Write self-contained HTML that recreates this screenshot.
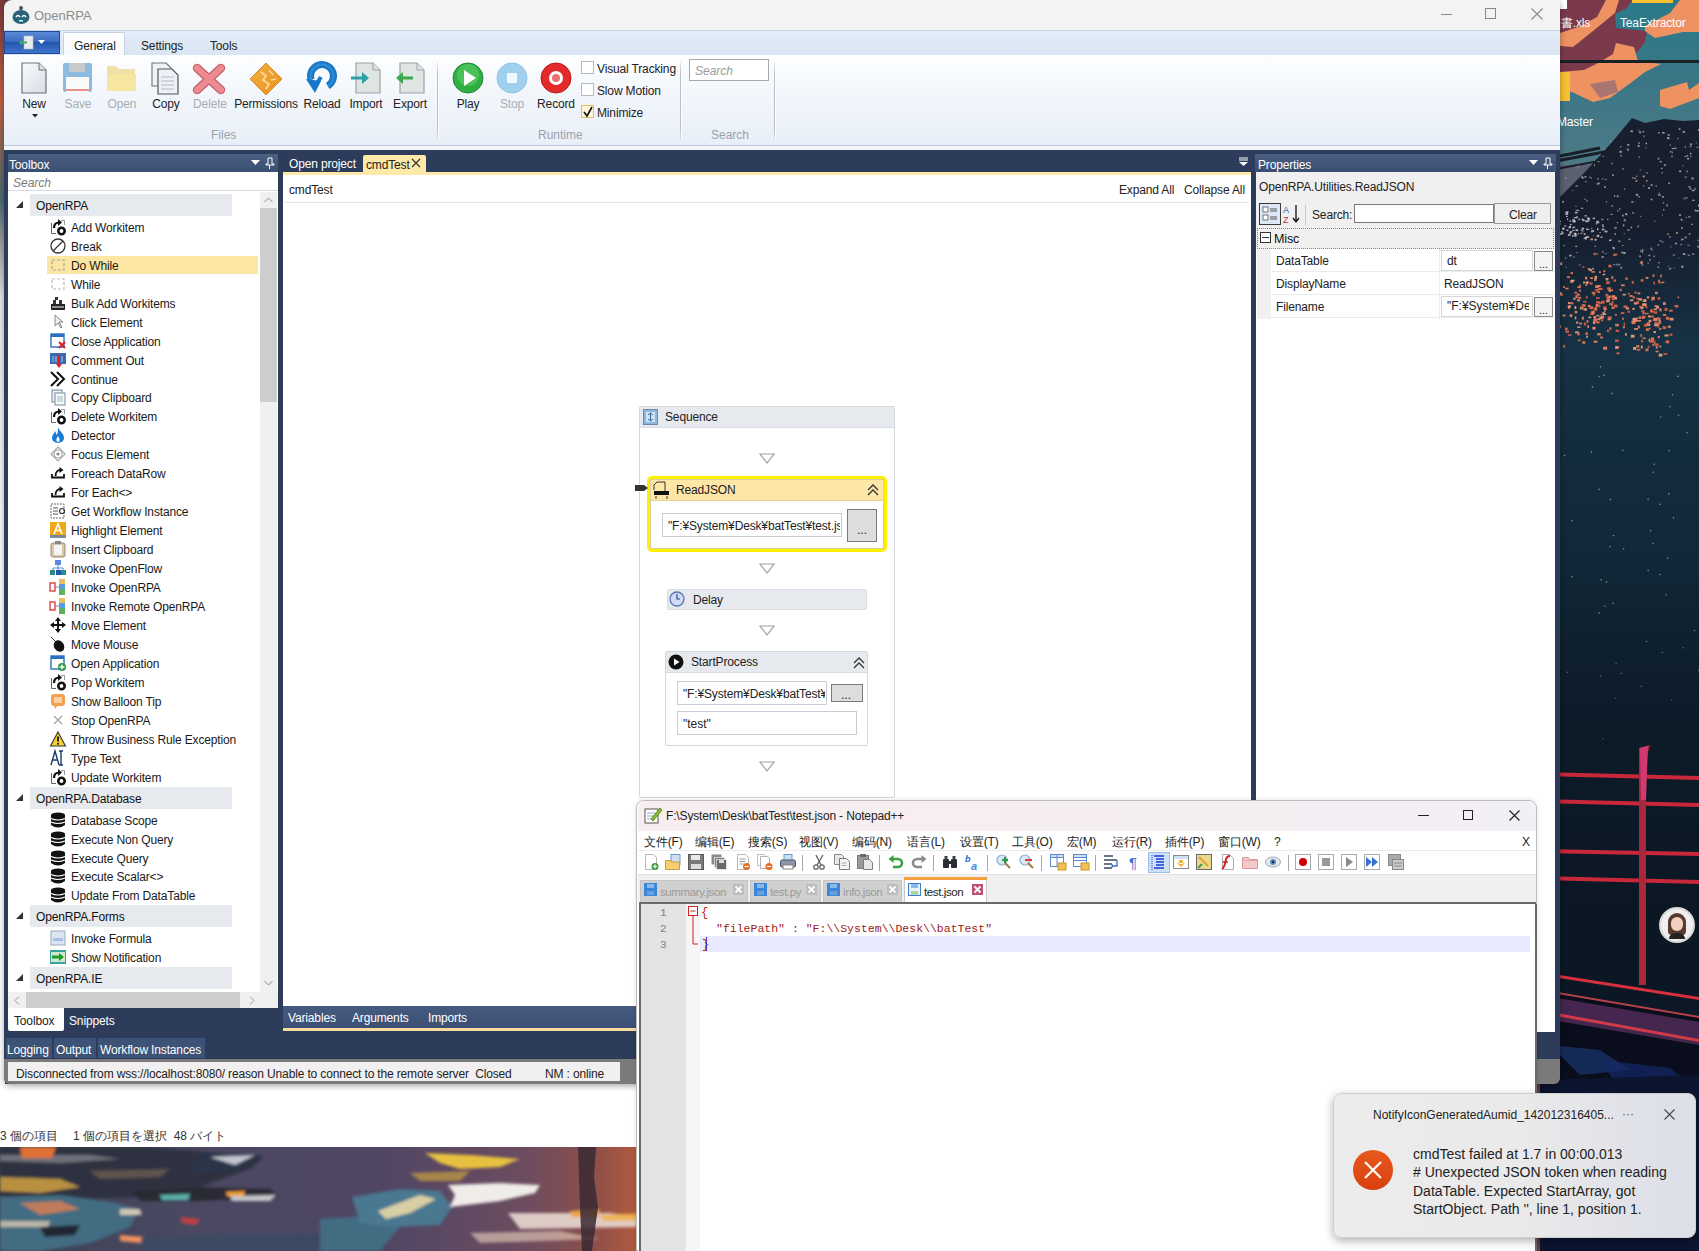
<!DOCTYPE html><html><head><meta charset="utf-8"><style>
*{box-sizing:border-box;margin:0;padding:0}
html,body{width:1699px;height:1251px;overflow:hidden;position:relative;background:#6e3a40;font-family:"Liberation Sans",sans-serif;font-size:12px;color:#1e1e1e}
.a{position:absolute}
.t{position:absolute;white-space:nowrap;line-height:14px}
svg{position:absolute;overflow:visible}
</style></head><body>
<svg style="left:1540px;top:0px;" width="159" height="1251" viewBox="0 0 159 1251">
<defs>
<linearGradient id="wsky" x1="0" y1="0" x2="0" y2="1">
<stop offset="0" stop-color="#2a7a8a"/><stop offset="0.45" stop-color="#3a7686"/><stop offset="1" stop-color="#4f7a86"/></linearGradient>
<linearGradient id="wdark" x1="0" y1="0" x2="0" y2="1">
<stop offset="0" stop-color="#182030"/><stop offset="0.1" stop-color="#161e2e"/><stop offset="0.2" stop-color="#163244"/><stop offset="0.3" stop-color="#132c3c"/><stop offset="0.5" stop-color="#0f2232"/><stop offset="0.7" stop-color="#0c1826"/><stop offset="1" stop-color="#0d1828"/></linearGradient>
<linearGradient id="wfade" x1="0" y1="0" x2="0" y2="1"><stop offset="0" stop-color="#0b1622" stop-opacity="0"/><stop offset=".35" stop-color="#0b1622" stop-opacity=".5"/><stop offset="1" stop-color="#0b1622" stop-opacity=".6"/></linearGradient>
<filter id="bl1"><feGaussianBlur stdDeviation="1.2"/></filter>
<filter id="bl3"><feGaussianBlur stdDeviation="6"/></filter>
</defs>
<rect x="0" y="0" width="159" height="170" fill="url(#wsky)"/><rect x="0" y="165" width="80" height="40" fill="#5a606e"/>
<path d="M0 0 H92 L87 8 L75 14 L76 28 L107 31 L105 42 L94 56 L84 59 L60 62 L61 72 L20 72 L0 72z" fill="#7a3a4c"/>
<path d="M66 0 L79 0 L75 13 L53 31 L33 47 L20 46 L20 33 L41 26 L57 17z" fill="#ee9262"/>
<path d="M76 43 L94 47 L98 61 L121 64 L105 72 L92 82 L81 90 L70 98 L53 102 L32 92 L20 90 L20 72 L44 70 L60 62 L73 54z" fill="#ee9262"/>
<path d="M50 84 L75 80 L78 92 L60 98z" fill="#8a6a78" opacity=".7"/>
<path d="M105 26 L130 13 L140 0 L159 0 L159 32 L143 32 L115 38 L105 31z" fill="#ee9262"/>
<path d="M120 90 L147 82 L149 90 L159 83 L159 98 L130 109 L120 106z" fill="#ee9262"/>
<rect x="0" y="72" width="30" height="29" fill="#f8c030"/>
<rect x="92" y="0" width="41" height="3" fill="#f8c030"/>
<rect x="0" y="60" width="159" height="3" fill="#1a2028"/>
<path d="M0 160 L60 148" stroke="#1a1e28" stroke-width="3" fill="none"/>
<path d="M0 202 L20 197 L45 172 L73 141 L92 118 L105 123 L124 119 L143 121 L159 120 V1251 H0z" fill="url(#wdark)"/>
<path d="M0 164 L75 150" stroke="#1a1e28" stroke-width="3" fill="none"/><path d="M0 172 L75 158" stroke="#1a1e28" stroke-width="2" fill="none"/>
<rect x="103.5" y="135.5" width="1.1" height="1.6" fill="#f0b890" opacity=".7"/><rect x="144.6" y="156.1" width="1.7" height="1.1" fill="#c8c8cc" opacity=".7"/><rect x="14.4" y="186.6" width="1.2" height="1.2" fill="#f0b890" opacity=".7"/><rect x="99.8" y="262.4" width="1.9" height="1.0" fill="#f0b890" opacity=".7"/><rect x="35.2" y="205.7" width="1.4" height="1.1" fill="#a8aab4" opacity=".7"/><rect x="129.8" y="151.2" width="1.9" height="1.2" fill="#f0b890" opacity=".7"/><rect x="15.5" y="228.3" width="1.1" height="1.2" fill="#f0b890" opacity=".7"/><rect x="108.2" y="187.0" width="1.7" height="1.9" fill="#e8e0dc" opacity=".7"/><rect x="57.5" y="161.0" width="2.0" height="1.2" fill="#a8aab4" opacity=".7"/><rect x="91.3" y="201.2" width="2.1" height="1.3" fill="#e8e0dc" opacity=".7"/><rect x="155.8" y="142.1" width="1.2" height="1.3" fill="#8a8c9a" opacity=".7"/><rect x="148.4" y="186.1" width="2.1" height="1.6" fill="#c8c8cc" opacity=".7"/><rect x="139.2" y="170.5" width="1.9" height="1.6" fill="#e8e0dc" opacity=".7"/><rect x="72.5" y="246.8" width="1.7" height="1.7" fill="#e8e0dc" opacity=".7"/><rect x="9.6" y="226.7" width="2.5" height="1.8" fill="#f0b890" opacity=".7"/><rect x="45.3" y="180.9" width="1.0" height="1.5" fill="#e8e0dc" opacity=".7"/><rect x="9.4" y="236.4" width="2.1" height="1.4" fill="#a8aab4" opacity=".7"/><rect x="145.8" y="197.0" width="1.7" height="1.5" fill="#a8aab4" opacity=".7"/><rect x="140.5" y="243.8" width="1.4" height="1.4" fill="#f0b890" opacity=".7"/><rect x="57.0" y="253.2" width="1.2" height="1.2" fill="#a8aab4" opacity=".7"/><rect x="77.1" y="210.4" width="1.4" height="1.1" fill="#e8e0dc" opacity=".7"/><rect x="85.0" y="213.4" width="2.4" height="1.7" fill="#e8e0dc" opacity=".7"/><rect x="82.0" y="214.6" width="1.7" height="1.9" fill="#c8c8cc" opacity=".7"/><rect x="151.3" y="223.7" width="1.6" height="1.4" fill="#f0b890" opacity=".7"/><rect x="16.5" y="217.0" width="1.3" height="2.0" fill="#c8c8cc" opacity=".7"/><rect x="70.1" y="140.9" width="1.1" height="1.0" fill="#f0b890" opacity=".7"/><rect x="139.0" y="214.0" width="2.0" height="2.0" fill="#a8aab4" opacity=".7"/><rect x="95.8" y="193.8" width="2.3" height="2.0" fill="#c8c8cc" opacity=".7"/><rect x="74.1" y="195.2" width="1.2" height="1.7" fill="#c8c8cc" opacity=".7"/><rect x="117.7" y="194.4" width="1.8" height="1.2" fill="#a8aab4" opacity=".7"/><rect x="151.4" y="177.5" width="2.4" height="1.8" fill="#f0b890" opacity=".7"/><rect x="47.4" y="218.2" width="2.0" height="1.3" fill="#c8c8cc" opacity=".7"/><rect x="122.7" y="202.2" width="1.5" height="1.2" fill="#f0b890" opacity=".7"/><rect x="129.0" y="267.8" width="2.2" height="1.8" fill="#a8aab4" opacity=".7"/><rect x="117.6" y="157.9" width="1.7" height="1.7" fill="#f0b890" opacity=".7"/><rect x="157.3" y="239.6" width="1.4" height="1.7" fill="#8a8c9a" opacity=".7"/><rect x="152.1" y="189.8" width="2.4" height="1.4" fill="#e8e0dc" opacity=".7"/><rect x="99.2" y="255.5" width="1.7" height="1.7" fill="#c8c8cc" opacity=".7"/><rect x="127.1" y="137.3" width="2.4" height="1.8" fill="#c8c8cc" opacity=".7"/><rect x="119.3" y="194.3" width="1.7" height="1.6" fill="#a8aab4" opacity=".7"/><rect x="13.8" y="262.2" width="1.7" height="1.7" fill="#8a8c9a" opacity=".7"/><rect x="157.9" y="129.0" width="2.4" height="1.8" fill="#f0b890" opacity=".7"/><rect x="23.2" y="244.8" width="2.0" height="1.4" fill="#8a8c9a" opacity=".7"/><rect x="87.2" y="144.0" width="2.2" height="1.7" fill="#c8c8cc" opacity=".7"/><rect x="16.3" y="233.7" width="1.7" height="1.9" fill="#a8aab4" opacity=".7"/><rect x="131.4" y="155.6" width="1.3" height="1.5" fill="#e8e0dc" opacity=".7"/><rect x="121.4" y="172.3" width="1.6" height="1.1" fill="#f0b890" opacity=".7"/><rect x="144.7" y="176.3" width="2.0" height="1.8" fill="#8a8c9a" opacity=".7"/><rect x="82.2" y="244.9" width="1.2" height="1.2" fill="#f0b890" opacity=".7"/><rect x="81.2" y="251.6" width="1.9" height="1.8" fill="#a8aab4" opacity=".7"/><rect x="98.4" y="142.4" width="1.5" height="1.5" fill="#c8c8cc" opacity=".7"/><rect x="88.3" y="238.7" width="2.3" height="1.1" fill="#c8c8cc" opacity=".7"/><rect x="15.5" y="190.6" width="2.1" height="1.9" fill="#c8c8cc" opacity=".7"/><rect x="70.5" y="213.8" width="1.9" height="1.2" fill="#f0b890" opacity=".7"/><rect x="44.1" y="198.7" width="1.8" height="1.2" fill="#8a8c9a" opacity=".7"/><rect x="83.2" y="252.0" width="2.4" height="1.9" fill="#e8e0dc" opacity=".7"/><rect x="32.2" y="189.9" width="1.2" height="1.4" fill="#8a8c9a" opacity=".7"/><rect x="11.6" y="222.1" width="2.3" height="1.2" fill="#c8c8cc" opacity=".7"/><rect x="113.9" y="220.7" width="1.4" height="1.1" fill="#a8aab4" opacity=".7"/><rect x="74.4" y="233.3" width="1.6" height="1.5" fill="#c8c8cc" opacity=".7"/><rect x="157.4" y="245.7" width="2.1" height="2.0" fill="#a8aab4" opacity=".7"/><rect x="64.2" y="186.1" width="1.5" height="1.7" fill="#e8e0dc" opacity=".7"/><rect x="3.1" y="205.3" width="2.1" height="1.4" fill="#8a8c9a" opacity=".7"/><rect x="82.3" y="167.8" width="1.2" height="1.9" fill="#c8c8cc" opacity=".7"/><rect x="36.3" y="252.1" width="1.4" height="1.0" fill="#c8c8cc" opacity=".7"/><rect x="123.9" y="164.2" width="2.2" height="1.8" fill="#a8aab4" opacity=".7"/><rect x="107.5" y="262.2" width="1.2" height="1.9" fill="#8a8c9a" opacity=".7"/><rect x="90.7" y="226.6" width="1.4" height="1.8" fill="#c8c8cc" opacity=".7"/><rect x="29.2" y="254.8" width="2.4" height="1.6" fill="#e8e0dc" opacity=".7"/><rect x="127.5" y="137.1" width="1.1" height="1.9" fill="#a8aab4" opacity=".7"/><rect x="72.1" y="174.2" width="1.6" height="1.9" fill="#f0b890" opacity=".7"/><rect x="98.9" y="131.3" width="2.4" height="2.0" fill="#a8aab4" opacity=".7"/><rect x="148.2" y="216.2" width="2.1" height="1.3" fill="#f0b890" opacity=".7"/><rect x="79.5" y="150.8" width="2.2" height="2.0" fill="#e8e0dc" opacity=".7"/><rect x="80.4" y="266.8" width="1.7" height="1.9" fill="#f0b890" opacity=".7"/><rect x="16.9" y="243.7" width="2.0" height="1.5" fill="#8a8c9a" opacity=".7"/><rect x="141.3" y="265.7" width="2.0" height="2.0" fill="#e8e0dc" opacity=".7"/><rect x="54.5" y="245.7" width="1.6" height="1.3" fill="#a8aab4" opacity=".7"/><rect x="11.2" y="232.4" width="1.6" height="1.1" fill="#e8e0dc" opacity=".7"/><rect x="105.8" y="180.2" width="2.0" height="1.3" fill="#f0b890" opacity=".7"/><rect x="38.5" y="167.5" width="1.3" height="1.3" fill="#8a8c9a" opacity=".7"/><rect x="52.3" y="267.8" width="1.4" height="2.0" fill="#e8e0dc" opacity=".7"/><rect x="49.2" y="176.7" width="1.5" height="1.1" fill="#c8c8cc" opacity=".7"/><rect x="44.3" y="220.1" width="1.8" height="1.0" fill="#a8aab4" opacity=".7"/><rect x="37.0" y="209.9" width="2.3" height="1.2" fill="#f0b890" opacity=".7"/><rect x="142.0" y="238.7" width="1.6" height="1.3" fill="#f0b890" opacity=".7"/><rect x="156.6" y="146.7" width="2.0" height="1.0" fill="#f0b890" opacity=".7"/><rect x="132.8" y="254.3" width="2.1" height="1.8" fill="#8a8c9a" opacity=".7"/><rect x="22.1" y="200.9" width="1.9" height="1.8" fill="#f0b890" opacity=".7"/><rect x="2.6" y="224.5" width="1.1" height="1.0" fill="#a8aab4" opacity=".7"/><rect x="101.3" y="264.1" width="2.3" height="1.6" fill="#8a8c9a" opacity=".7"/><rect x="99.8" y="215.8" width="1.7" height="1.0" fill="#a8aab4" opacity=".7"/><rect x="126.8" y="233.5" width="2.3" height="1.1" fill="#f0b890" opacity=".7"/><rect x="83.6" y="233.1" width="1.4" height="1.1" fill="#8a8c9a" opacity=".7"/><rect x="42.2" y="230.8" width="1.3" height="1.6" fill="#a8aab4" opacity=".7"/><rect x="73.2" y="247.6" width="1.7" height="1.7" fill="#c8c8cc" opacity=".7"/><rect x="121.9" y="214.5" width="1.1" height="1.1" fill="#a8aab4" opacity=".7"/><rect x="40.4" y="232.8" width="1.9" height="1.1" fill="#e8e0dc" opacity=".7"/><rect x="76.7" y="195.4" width="2.0" height="1.7" fill="#c8c8cc" opacity=".7"/><rect x="46.2" y="199.9" width="1.7" height="1.8" fill="#8a8c9a" opacity=".7"/><rect x="157.9" y="204.6" width="2.5" height="1.9" fill="#e8e0dc" opacity=".7"/><rect x="2.8" y="191.6" width="2.5" height="1.4" fill="#f0b890" opacity=".7"/><rect x="150.3" y="155.6" width="1.1" height="1.7" fill="#f0b890" opacity=".7"/><rect x="41.6" y="177.1" width="2.2" height="1.5" fill="#f0b890" opacity=".7"/><rect x="141.0" y="227.0" width="1.7" height="1.9" fill="#a8aab4" opacity=".7"/><rect x="62.7" y="148.1" width="2.0" height="1.4" fill="#8a8c9a" opacity=".7"/><rect x="115.6" y="185.3" width="1.5" height="1.8" fill="#8a8c9a" opacity=".7"/><rect x="0.3" y="233.9" width="1.2" height="1.9" fill="#8a8c9a" opacity=".7"/><rect x="113.4" y="255.7" width="1.4" height="1.1" fill="#e8e0dc" opacity=".7"/><rect x="62.0" y="251.1" width="1.5" height="1.4" fill="#c8c8cc" opacity=".7"/><rect x="16.2" y="246.0" width="2.0" height="1.1" fill="#e8e0dc" opacity=".7"/><rect x="154.4" y="188.3" width="1.3" height="1.4" fill="#e8e0dc" opacity=".7"/><rect x="152.0" y="253.2" width="2.4" height="1.9" fill="#8a8c9a" opacity=".7"/><rect x="87.3" y="229.3" width="2.4" height="1.4" fill="#c8c8cc" opacity=".7"/><rect x="97.8" y="145.1" width="1.7" height="1.9" fill="#e8e0dc" opacity=".7"/><rect x="87.5" y="149.8" width="1.5" height="1.3" fill="#8a8c9a" opacity=".7"/><rect x="117.5" y="266.6" width="1.6" height="1.2" fill="#e8e0dc" opacity=".7"/><rect x="76.8" y="222.0" width="1.3" height="1.2" fill="#c8c8cc" opacity=".7"/><rect x="33.1" y="256.4" width="1.8" height="1.5" fill="#8a8c9a" opacity=".7"/><rect x="52.9" y="235.1" width="1.2" height="1.2" fill="#8a8c9a" opacity=".7"/><rect x="41.1" y="207.6" width="2.1" height="1.4" fill="#c8c8cc" opacity=".7"/><rect x="65.8" y="201.0" width="1.4" height="1.8" fill="#8a8c9a" opacity=".7"/><rect x="79.2" y="208.3" width="1.2" height="1.5" fill="#e8e0dc" opacity=".7"/><rect x="100.1" y="250.1" width="1.1" height="1.9" fill="#a8aab4" opacity=".7"/><rect x="61.1" y="218.6" width="2.4" height="1.8" fill="#8a8c9a" opacity=".7"/><rect x="138.8" y="128.2" width="1.6" height="1.8" fill="#c8c8cc" opacity=".7"/><rect x="127.9" y="265.4" width="1.0" height="1.4" fill="#8a8c9a" opacity=".7"/><rect x="147.4" y="244.7" width="2.5" height="1.2" fill="#8a8c9a" opacity=".7"/><rect x="83.1" y="223.9" width="1.1" height="1.8" fill="#8a8c9a" opacity=".7"/><rect x="90.5" y="130.5" width="2.4" height="1.6" fill="#e8e0dc" opacity=".7"/><rect x="84.0" y="188.4" width="1.1" height="1.3" fill="#c8c8cc" opacity=".7"/><rect x="150.0" y="152.8" width="1.3" height="1.6" fill="#e8e0dc" opacity=".7"/><rect x="73.2" y="264.0" width="1.7" height="1.2" fill="#a8aab4" opacity=".7"/><rect x="39.3" y="264.3" width="1.1" height="1.2" fill="#e8e0dc" opacity=".7"/><rect x="140.7" y="218.8" width="1.4" height="1.7" fill="#c8c8cc" opacity=".7"/><rect x="147.1" y="157.9" width="2.0" height="1.7" fill="#c8c8cc" opacity=".7"/><rect x="57.6" y="182.5" width="2.2" height="1.7" fill="#c8c8cc" opacity=".7"/><rect x="80.3" y="154.8" width="1.5" height="1.8" fill="#a8aab4" opacity=".7"/><rect x="120.9" y="167.8" width="1.7" height="1.2" fill="#f0b890" opacity=".7"/><rect x="35.5" y="185.5" width="2.4" height="1.1" fill="#c8c8cc" opacity=".7"/><rect x="62.6" y="155.9" width="1.2" height="1.1" fill="#f0b890" opacity=".7"/><rect x="142.8" y="253.1" width="2.5" height="1.9" fill="#c8c8cc" opacity=".7"/><rect x="148.8" y="233.2" width="1.5" height="1.7" fill="#c8c8cc" opacity=".7"/><rect x="133.4" y="267.8" width="1.3" height="1.0" fill="#8a8c9a" opacity=".7"/><rect x="44.5" y="176.0" width="1.8" height="1.8" fill="#c8c8cc" opacity=".7"/><rect x="60.4" y="236.5" width="2.2" height="1.4" fill="#e8e0dc" opacity=".7"/><rect x="7.8" y="193.7" width="1.8" height="1.4" fill="#e8e0dc" opacity=".7"/><rect x="51.4" y="231.9" width="1.0" height="1.4" fill="#8a8c9a" opacity=".7"/><rect x="129.1" y="236.2" width="1.6" height="1.5" fill="#c8c8cc" opacity=".7"/><rect x="127.7" y="134.0" width="2.1" height="1.9" fill="#a8aab4" opacity=".7"/><rect x="53.9" y="164.5" width="1.1" height="1.7" fill="#f0b890" opacity=".7"/><rect x="109.6" y="259.0" width="1.0" height="1.8" fill="#e8e0dc" opacity=".7"/><rect x="145.7" y="216.9" width="1.0" height="1.2" fill="#c8c8cc" opacity=".7"/><rect x="75.6" y="263.7" width="2.2" height="1.9" fill="#8a8c9a" opacity=".7"/><rect x="129.6" y="144.2" width="1.3" height="1.8" fill="#8a8c9a" opacity=".7"/><rect x="117.4" y="244.3" width="1.9" height="1.3" fill="#a8aab4" opacity=".7"/><rect x="50.8" y="177.5" width="1.1" height="1.2" fill="#f0b890" opacity=".7"/><rect x="119.7" y="160.9" width="2.0" height="1.5" fill="#c8c8cc" opacity=".7"/><rect x="86.6" y="148.3" width="2.3" height="2.0" fill="#8a8c9a" opacity=".7"/><rect x="15.3" y="197.3" width="1.3" height="1.1" fill="#8a8c9a" opacity=".7"/><rect x="73.3" y="254.2" width="2.1" height="1.8" fill="#a8aab4" opacity=".7"/><rect x="105.6" y="142.6" width="1.4" height="1.6" fill="#e8e0dc" opacity=".7"/><rect x="59.3" y="232.0" width="1.7" height="1.2" fill="#a8aab4" opacity=".7"/><rect x="37.4" y="165.8" width="1.3" height="1.1" fill="#f0b890" opacity=".7"/><rect x="83.7" y="219.2" width="2.0" height="2.0" fill="#c8c8cc" opacity=".7"/><rect x="16.3" y="193.8" width="2.3" height="1.9" fill="#a8aab4" opacity=".7"/><rect x="154.7" y="209.6" width="1.6" height="1.9" fill="#c8c8cc" opacity=".7"/><rect x="71.4" y="162.7" width="1.2" height="1.6" fill="#c8c8cc" opacity=".7"/><rect x="98.6" y="156.6" width="1.5" height="1.0" fill="#e8e0dc" opacity=".7"/><rect x="159.0" y="130.5" width="2.2" height="1.8" fill="#a8aab4" opacity=".7"/><rect x="65.0" y="178.9" width="1.5" height="1.2" fill="#f0b890" opacity=".7"/><rect x="126.4" y="204.5" width="1.6" height="1.8" fill="#c8c8cc" opacity=".7"/><rect x="105.6" y="147.4" width="1.1" height="1.2" fill="#f0b890" opacity=".7"/><rect x="110.6" y="184.4" width="2.0" height="1.4" fill="#e8e0dc" opacity=".7"/><rect x="8.2" y="233.1" width="1.6" height="1.0" fill="#e8e0dc" opacity=".7"/><rect x="121.9" y="241.3" width="1.6" height="1.4" fill="#a8aab4" opacity=".7"/><rect x="149.8" y="188.0" width="1.6" height="1.8" fill="#a8aab4" opacity=".7"/><rect x="64.6" y="253.0" width="2.2" height="1.1" fill="#8a8c9a" opacity=".7"/><rect x="128.2" y="182.5" width="1.9" height="1.4" fill="#f0b890" opacity=".7"/><rect x="80.2" y="146.2" width="1.2" height="1.2" fill="#e8e0dc" opacity=".7"/><rect x="119.8" y="239.9" width="1.5" height="1.8" fill="#a8aab4" opacity=".7"/><rect x="6.9" y="257.4" width="1.1" height="1.9" fill="#e8e0dc" opacity=".7"/><rect x="61.7" y="256.1" width="2.0" height="1.9" fill="#f0b890" opacity=".7"/><rect x="101.8" y="249.2" width="1.6" height="1.8" fill="#f0b890" opacity=".7"/><rect x="131.8" y="151.5" width="1.1" height="1.9" fill="#a8aab4" opacity=".7"/><rect x="24.9" y="177.1" width="1.4" height="1.7" fill="#a8aab4" opacity=".7"/><rect x="142.7" y="131.0" width="2.3" height="1.7" fill="#f0b890" opacity=".7"/><rect x="106.2" y="172.0" width="1.9" height="1.6" fill="#8a8c9a" opacity=".7"/><rect x="99.7" y="169.4" width="1.5" height="1.2" fill="#8a8c9a" opacity=".7"/><rect x="61.9" y="178.3" width="1.7" height="1.0" fill="#f0b890" opacity=".7"/><rect x="98.4" y="196.0" width="1.7" height="1.6" fill="#a8aab4" opacity=".7"/><rect x="130.2" y="246.3" width="1.6" height="1.1" fill="#8a8c9a" opacity=".7"/><rect x="57.0" y="178.0" width="1.8" height="1.7" fill="#8a8c9a" opacity=".7"/><rect x="146.6" y="170.5" width="1.1" height="1.8" fill="#f0b890" opacity=".7"/><rect x="142.3" y="219.6" width="1.0" height="1.1" fill="#a8aab4" opacity=".7"/><rect x="97.6" y="225.4" width="1.3" height="2.0" fill="#c8c8cc" opacity=".7"/><rect x="78.2" y="263.7" width="2.0" height="1.7" fill="#a8aab4" opacity=".7"/><rect x="35.2" y="245.8" width="2.1" height="1.2" fill="#f0b890" opacity=".7"/><rect x="142.5" y="164.9" width="1.2" height="1.5" fill="#8a8c9a" opacity=".7"/><rect x="146.3" y="155.2" width="1.9" height="1.2" fill="#e8e0dc" opacity=".7"/><rect x="59.2" y="153.8" width="1.2" height="1.9" fill="#8a8c9a" opacity=".7"/><rect x="108.1" y="254.8" width="2.2" height="1.3" fill="#a8aab4" opacity=".7"/><rect x="122.2" y="132.0" width="2.4" height="1.5" fill="#e8e0dc" opacity=".7"/><rect x="82.9" y="224.9" width="1.4" height="1.5" fill="#c8c8cc" opacity=".7"/><rect x="136.2" y="232.0" width="1.4" height="2.0" fill="#e8e0dc" opacity=".7"/><rect x="91.8" y="177.2" width="1.7" height="1.2" fill="#c8c8cc" opacity=".7"/><rect x="118.2" y="132.0" width="1.4" height="1.6" fill="#f0b890" opacity=".7"/><rect x="156.5" y="210.0" width="2.1" height="1.7" fill="#e8e0dc" opacity=".7"/><rect x="35.2" y="167.2" width="1.6" height="1.4" fill="#8a8c9a" opacity=".7"/><rect x="7.6" y="195.8" width="2.0" height="1.0" fill="#f0b890" opacity=".7"/><rect x="35.7" y="209.6" width="1.2" height="1.4" fill="#f0b890" opacity=".7"/><rect x="131.7" y="148.0" width="2.4" height="1.2" fill="#c8c8cc" opacity=".7"/><rect x="101.5" y="251.3" width="1.6" height="1.3" fill="#e8e0dc" opacity=".7"/><rect x="1.8" y="218.5" width="2.3" height="1.6" fill="#f0b890" opacity=".7"/><rect x="92.0" y="212.3" width="2.1" height="1.2" fill="#f0b890" opacity=".7"/><rect x="143.7" y="131.4" width="1.0" height="1.2" fill="#f0b890" opacity=".7"/><rect x="25.3" y="257.2" width="1.0" height="1.6" fill="#c8c8cc" opacity=".7"/><rect x="149.6" y="145.6" width="1.8" height="1.6" fill="#a8aab4" opacity=".7"/><rect x="103.0" y="185.2" width="1.3" height="1.3" fill="#f0b890" opacity=".7"/><rect x="141.4" y="238.5" width="1.0" height="1.8" fill="#f0b890" opacity=".7"/><rect x="118.5" y="192.5" width="1.3" height="2.0" fill="#8a8c9a" opacity=".7"/><rect x="41.6" y="218.4" width="1.5" height="1.7" fill="#c8c8cc" opacity=".7"/><rect x="110.5" y="247.6" width="1.4" height="1.6" fill="#c8c8cc" opacity=".7"/><rect x="69.3" y="239.3" width="2.5" height="1.3" fill="#f0b890" opacity=".7"/><rect x="147.6" y="254.7" width="2.3" height="1.0" fill="#c8c8cc" opacity=".7"/><rect x="118.3" y="262.0" width="1.3" height="1.4" fill="#e8e0dc" opacity=".7"/><rect x="95.6" y="180.0" width="1.7" height="1.8" fill="#f0b890" opacity=".7"/><rect x="110.9" y="249.3" width="2.4" height="1.2" fill="#8a8c9a" opacity=".7"/><rect x="140.7" y="239.4" width="1.9" height="1.1" fill="#8a8c9a" opacity=".7"/><rect x="144.8" y="146.0" width="1.2" height="1.6" fill="#c8c8cc" opacity=".7"/><rect x="25.7" y="266.7" width="1.0" height="1.1" fill="#c8c8cc" opacity=".7"/><rect x="102.3" y="131.2" width="2.1" height="1.1" fill="#c8c8cc" opacity=".7"/><rect x="93.9" y="177.7" width="2.3" height="1.1" fill="#f0b890" opacity=".7"/><rect x="138.0" y="257.6" width="1.2" height="1.2" fill="#8a8c9a" opacity=".7"/><rect x="134.8" y="242.7" width="2.2" height="1.6" fill="#c8c8cc" opacity=".7"/><rect x="15.6" y="234.8" width="1.4" height="1.3" fill="#a8aab4" opacity=".7"/><rect x="41.5" y="175.9" width="1.1" height="1.8" fill="#e8e0dc" opacity=".7"/><rect x="144.7" y="236.5" width="1.8" height="1.9" fill="#f0b890" opacity=".7"/><rect x="98.3" y="129.5" width="1.0" height="1.5" fill="#8a8c9a" opacity=".7"/><rect x="15.6" y="193.0" width="1.8" height="1.2" fill="#c8c8cc" opacity=".7"/><rect x="137.1" y="138.2" width="1.3" height="1.0" fill="#e8e0dc" opacity=".7"/><rect x="32.1" y="235.5" width="1.0" height="1.5" fill="#c8c8cc" opacity=".7"/><rect x="78.1" y="240.5" width="2.5" height="1.6" fill="#a8aab4" opacity=".7"/><rect x="152.2" y="199.7" width="2.4" height="1.3" fill="#f0b890" opacity=".7"/><rect x="34.1" y="226.4" width="1.2" height="1.9" fill="#8a8c9a" opacity=".7"/><rect x="121.9" y="196.1" width="2.2" height="1.6" fill="#f0b890" opacity=".7"/><rect x="56.5" y="183.2" width="2.3" height="1.7" fill="#8a8c9a" opacity=".7"/><rect x="67.1" y="218.7" width="1.3" height="1.3" fill="#e8e0dc" opacity=".7"/><rect x="143.3" y="197.7" width="2.5" height="1.6" fill="#8a8c9a" opacity=".7"/><rect x="150.1" y="143.4" width="2.1" height="1.8" fill="#f0b890" opacity=".7"/><rect x="102.8" y="175.5" width="1.8" height="1.9" fill="#e8e0dc" opacity=".7"/><rect x="71.6" y="205.3" width="1.3" height="1.4" fill="#e8e0dc" opacity=".7"/><rect x="123.0" y="209.0" width="1.5" height="1.6" fill="#a8aab4" opacity=".7"/><rect x="110.8" y="198.6" width="1.5" height="1.7" fill="#e8e0dc" opacity=".7"/><rect x="134.1" y="147.4" width="2.5" height="1.7" fill="#a8aab4" opacity=".7"/><rect x="95.9" y="175.6" width="1.5" height="1.2" fill="#a8aab4" opacity=".7"/><rect x="62.3" y="224.2" width="1.2" height="2.0" fill="#d8d4dc" opacity=".8"/><rect x="51.1" y="230.1" width="3.0" height="1.8" fill="#d8d4dc" opacity=".8"/><rect x="38.4" y="218.6" width="1.4" height="1.6" fill="#d8d4dc" opacity=".8"/><rect x="47.5" y="229.0" width="1.8" height="1.0" fill="#d8d4dc" opacity=".8"/><rect x="20.0" y="233.3" width="2.4" height="1.5" fill="#d8d4dc" opacity=".8"/><rect x="29.5" y="220.2" width="1.3" height="1.6" fill="#d8d4dc" opacity=".8"/><rect x="21.0" y="232.5" width="2.8" height="1.4" fill="#d8d4dc" opacity=".8"/><rect x="19.2" y="220.8" width="1.8" height="1.2" fill="#d8d4dc" opacity=".8"/><rect x="35.0" y="211.8" width="2.5" height="1.7" fill="#d8d4dc" opacity=".8"/><rect x="52.7" y="217.6" width="2.3" height="1.5" fill="#d8d4dc" opacity=".8"/><rect x="32.4" y="235.1" width="1.2" height="1.4" fill="#d8d4dc" opacity=".8"/><rect x="44.5" y="215.2" width="2.3" height="1.3" fill="#d8d4dc" opacity=".8"/><rect x="26.3" y="229.6" width="2.2" height="1.4" fill="#d8d4dc" opacity=".8"/><rect x="25.4" y="211.6" width="1.4" height="1.7" fill="#d8d4dc" opacity=".8"/><rect x="42.4" y="219.2" width="2.0" height="2.0" fill="#d8d4dc" opacity=".8"/><rect x="57.0" y="228.1" width="1.3" height="1.8" fill="#d8d4dc" opacity=".8"/><rect x="55.8" y="222.9" width="1.2" height="1.6" fill="#d8d4dc" opacity=".8"/><rect x="18.5" y="223.2" width="2.0" height="1.6" fill="#d8d4dc" opacity=".8"/><rect x="48.1" y="218.5" width="1.8" height="1.9" fill="#d8d4dc" opacity=".8"/><rect x="45.3" y="236.3" width="1.8" height="1.8" fill="#d8d4dc" opacity=".8"/><rect x="69.0" y="240.0" width="1.7" height="1.1" fill="#d8d4dc" opacity=".8"/><rect x="37.8" y="233.0" width="1.0" height="1.4" fill="#d8d4dc" opacity=".8"/><rect x="21.0" y="231.2" width="1.7" height="1.3" fill="#d8d4dc" opacity=".8"/><rect x="43.7" y="237.4" width="2.9" height="1.5" fill="#d8d4dc" opacity=".8"/><rect x="44.9" y="238.3" width="1.8" height="1.2" fill="#d8d4dc" opacity=".8"/><rect x="56.7" y="234.8" width="2.6" height="1.6" fill="#d8d4dc" opacity=".8"/><rect x="22.3" y="227.7" width="1.5" height="2.0" fill="#d8d4dc" opacity=".8"/><rect x="27.9" y="234.0" width="2.6" height="1.8" fill="#d8d4dc" opacity=".8"/><rect x="28.5" y="227.2" width="2.1" height="1.1" fill="#d8d4dc" opacity=".8"/><rect x="46.6" y="220.3" width="2.7" height="1.3" fill="#d8d4dc" opacity=".8"/><rect x="32.4" y="229.8" width="1.9" height="1.2" fill="#d8d4dc" opacity=".8"/><rect x="62.4" y="226.2" width="1.6" height="1.2" fill="#d8d4dc" opacity=".8"/><rect x="34.9" y="233.6" width="1.9" height="1.6" fill="#d8d4dc" opacity=".8"/><rect x="32.8" y="220.4" width="2.9" height="1.9" fill="#d8d4dc" opacity=".8"/><rect x="64.6" y="230.6" width="2.8" height="1.8" fill="#d8d4dc" opacity=".8"/><rect x="56.8" y="236.2" width="2.3" height="1.0" fill="#d8d4dc" opacity=".8"/><rect x="74.4" y="227.2" width="2.3" height="1.3" fill="#d8d4dc" opacity=".8"/><rect x="46.2" y="228.3" width="1.5" height="1.8" fill="#d8d4dc" opacity=".8"/><rect x="35.4" y="229.3" width="2.8" height="1.8" fill="#d8d4dc" opacity=".8"/><rect x="54.5" y="238.8" width="2.2" height="1.8" fill="#d8d4dc" opacity=".8"/><rect x="25.5" y="213.1" width="2.6" height="1.8" fill="#d8d4dc" opacity=".8"/><rect x="47.0" y="236.2" width="2.1" height="1.7" fill="#d8d4dc" opacity=".8"/><rect x="13.1" y="231.5" width="2.1" height="1.3" fill="#d8d4dc" opacity=".8"/><rect x="40.8" y="229.8" width="2.0" height="1.1" fill="#d8d4dc" opacity=".8"/><rect x="32.3" y="226.8" width="2.0" height="1.5" fill="#d8d4dc" opacity=".8"/><rect x="12.9" y="222.6" width="1.0" height="1.8" fill="#d8d4dc" opacity=".8"/><rect x="22.4" y="227.8" width="2.3" height="1.8" fill="#d8d4dc" opacity=".8"/><rect x="29.7" y="231.2" width="2.9" height="1.1" fill="#d8d4dc" opacity=".8"/><rect x="27.0" y="218.4" width="1.1" height="1.6" fill="#d8d4dc" opacity=".8"/><rect x="26.7" y="211.2" width="1.7" height="2.0" fill="#d8d4dc" opacity=".8"/><rect x="23.9" y="225.5" width="2.8" height="1.0" fill="#d8d4dc" opacity=".8"/><rect x="36.1" y="216.4" width="1.7" height="1.9" fill="#d8d4dc" opacity=".8"/><rect x="29.4" y="231.9" width="2.1" height="1.8" fill="#d8d4dc" opacity=".8"/><rect x="43.7" y="233.3" width="1.8" height="1.6" fill="#d8d4dc" opacity=".8"/><rect x="45.4" y="220.8" width="2.7" height="1.4" fill="#d8d4dc" opacity=".8"/><rect x="28.9" y="225.9" width="2.0" height="2.0" fill="#d8d4dc" opacity=".8"/><rect x="26.0" y="215.8" width="1.7" height="1.3" fill="#d8d4dc" opacity=".8"/><rect x="34.3" y="234.9" width="2.3" height="1.8" fill="#d8d4dc" opacity=".8"/><rect x="61.7" y="228.8" width="2.8" height="1.5" fill="#d8d4dc" opacity=".8"/><rect x="51.3" y="227.8" width="1.0" height="1.2" fill="#d8d4dc" opacity=".8"/><rect x="56.9" y="221.5" width="2.3" height="1.8" fill="#d8d4dc" opacity=".8"/><rect x="56.2" y="220.8" width="2.2" height="1.6" fill="#d8d4dc" opacity=".8"/><rect x="33.8" y="217.1" width="2.4" height="1.2" fill="#d8d4dc" opacity=".8"/><rect x="32.3" y="219.3" width="2.5" height="1.1" fill="#d8d4dc" opacity=".8"/><rect x="41.6" y="227.7" width="2.5" height="1.9" fill="#d8d4dc" opacity=".8"/><rect x="32.5" y="220.4" width="2.6" height="1.8" fill="#d8d4dc" opacity=".8"/><rect x="30.0" y="223.9" width="1.6" height="1.4" fill="#d8d4dc" opacity=".8"/><rect x="33.8" y="232.8" width="2.3" height="1.9" fill="#d8d4dc" opacity=".8"/><rect x="57.1" y="229.0" width="1.1" height="1.1" fill="#d8d4dc" opacity=".8"/><rect x="46.8" y="217.5" width="2.8" height="1.4" fill="#d8d4dc" opacity=".8"/><rect x="71.7" y="306.9" width="2.7" height="2.1" fill="#f08868" opacity=".9"/><rect x="75.1" y="323.9" width="3.7" height="2.4" fill="#f08868" opacity=".9"/><rect x="49.5" y="306.3" width="4.0" height="2.8" fill="#e87050" opacity=".9"/><rect x="54.0" y="316.0" width="1.5" height="2.6" fill="#f0a080" opacity=".9"/><rect x="53.6" y="340.7" width="3.8" height="2.0" fill="#f08868" opacity=".9"/><rect x="51.5" y="271.1" width="3.3" height="1.6" fill="#f08868" opacity=".9"/><rect x="30.3" y="280.0" width="3.2" height="2.8" fill="#f0a080" opacity=".9"/><rect x="57.6" y="301.3" width="1.5" height="1.5" fill="#e87050" opacity=".9"/><rect x="30.5" y="272.1" width="2.5" height="2.0" fill="#e87050" opacity=".9"/><rect x="11.3" y="272.4" width="3.0" height="2.0" fill="#f0a080" opacity=".9"/><rect x="82.6" y="293.8" width="3.2" height="1.7" fill="#f0a080" opacity=".9"/><rect x="57.6" y="285.0" width="3.1" height="2.1" fill="#f08868" opacity=".9"/><rect x="25.5" y="330.4" width="3.5" height="2.4" fill="#d86048" opacity=".9"/><rect x="50.1" y="312.5" width="3.7" height="2.6" fill="#d86048" opacity=".9"/><rect x="63.4" y="306.2" width="3.0" height="3.0" fill="#d86048" opacity=".9"/><rect x="52.5" y="326.8" width="3.0" height="2.8" fill="#f0a080" opacity=".9"/><rect x="57.8" y="288.2" width="2.3" height="1.9" fill="#e87050" opacity=".9"/><rect x="76.8" y="346.4" width="2.2" height="1.7" fill="#e87050" opacity=".9"/><rect x="100.6" y="261.1" width="2.2" height="2.8" fill="#f08868" opacity=".9"/><rect x="62.7" y="273.7" width="2.4" height="1.6" fill="#f0a080" opacity=".9"/><rect x="18.3" y="292.0" width="3.5" height="2.6" fill="#f08868" opacity=".9"/><rect x="69.1" y="302.9" width="3.2" height="2.2" fill="#e87050" opacity=".9"/><rect x="56.1" y="321.2" width="3.5" height="2.2" fill="#e87050" opacity=".9"/><rect x="82.9" y="325.9" width="2.1" height="2.4" fill="#e87050" opacity=".9"/><rect x="85.2" y="277.4" width="2.7" height="2.4" fill="#d86048" opacity=".9"/><rect x="56.9" y="318.3" width="3.5" height="1.9" fill="#f08868" opacity=".9"/><rect x="35.4" y="295.3" width="2.1" height="2.9" fill="#f08868" opacity=".9"/><rect x="11.9" y="306.9" width="3.1" height="2.7" fill="#d86048" opacity=".9"/><rect x="67.0" y="329.7" width="2.2" height="2.4" fill="#d86048" opacity=".9"/><rect x="63.2" y="313.3" width="3.0" height="1.8" fill="#f0a080" opacity=".9"/><rect x="66.5" y="297.0" width="3.9" height="2.7" fill="#e87050" opacity=".9"/><rect x="73.6" y="253.6" width="3.6" height="2.0" fill="#d86048" opacity=".9"/><rect x="71.5" y="304.3" width="1.6" height="2.3" fill="#e87050" opacity=".9"/><rect x="67.2" y="287.3" width="3.7" height="2.5" fill="#e87050" opacity=".9"/><rect x="79.6" y="288.8" width="2.1" height="2.3" fill="#e87050" opacity=".9"/><rect x="20.2" y="262.4" width="2.0" height="2.8" fill="#f0a080" opacity=".9"/><rect x="41.9" y="316.7" width="1.9" height="2.9" fill="#f08868" opacity=".9"/><rect x="58.5" y="302.2" width="3.6" height="1.6" fill="#e87050" opacity=".9"/><rect x="59.1" y="271.3" width="1.6" height="1.7" fill="#f0a080" opacity=".9"/><rect x="53.5" y="252.9" width="3.0" height="2.2" fill="#d86048" opacity=".9"/><rect x="39.0" y="284.7" width="2.1" height="1.7" fill="#d86048" opacity=".9"/><rect x="39.9" y="306.6" width="3.5" height="2.9" fill="#f08868" opacity=".9"/><rect x="69.5" y="289.5" width="3.5" height="1.7" fill="#f08868" opacity=".9"/><rect x="56.0" y="297.3" width="3.7" height="1.7" fill="#d86048" opacity=".9"/><rect x="43.5" y="308.2" width="3.6" height="2.4" fill="#f0a080" opacity=".9"/><rect x="34.6" y="310.9" width="2.7" height="2.4" fill="#f08868" opacity=".9"/><rect x="60.8" y="317.2" width="2.0" height="2.2" fill="#e87050" opacity=".9"/><rect x="68.5" y="289.8" width="2.2" height="2.1" fill="#f08868" opacity=".9"/><rect x="60.9" y="319.5" width="2.3" height="1.8" fill="#d86048" opacity=".9"/><rect x="34.5" y="306.1" width="1.8" height="3.0" fill="#f0a080" opacity=".9"/><rect x="91.8" y="321.3" width="2.9" height="2.8" fill="#f08868" opacity=".9"/><rect x="76.6" y="330.1" width="2.6" height="1.9" fill="#d86048" opacity=".9"/><rect x="53.0" y="321.2" width="2.2" height="2.8" fill="#f0a080" opacity=".9"/><rect x="82.1" y="317.5" width="1.9" height="2.5" fill="#d86048" opacity=".9"/><rect x="29.7" y="314.3" width="2.6" height="2.7" fill="#f08868" opacity=".9"/><rect x="67.4" y="298.7" width="2.6" height="2.9" fill="#d86048" opacity=".9"/><rect x="57.2" y="333.1" width="3.6" height="2.3" fill="#f08868" opacity=".9"/><rect x="53.5" y="318.6" width="3.6" height="2.8" fill="#e87050" opacity=".9"/><rect x="47.9" y="268.0" width="2.0" height="2.4" fill="#f08868" opacity=".9"/><rect x="42.4" y="266.2" width="2.0" height="1.6" fill="#d86048" opacity=".9"/><rect x="49.8" y="282.6" width="2.8" height="2.0" fill="#e87050" opacity=".9"/><rect x="46.3" y="335.8" width="1.7" height="2.1" fill="#f0a080" opacity=".9"/><rect x="52.9" y="293.3" width="2.1" height="2.3" fill="#d86048" opacity=".9"/><rect x="57.4" y="304.5" width="2.9" height="2.8" fill="#d86048" opacity=".9"/><rect x="23.3" y="345.1" width="1.8" height="2.6" fill="#e87050" opacity=".9"/><rect x="68.3" y="264.7" width="3.4" height="2.8" fill="#d86048" opacity=".9"/><rect x="14.1" y="283.3" width="3.7" height="2.9" fill="#d86048" opacity=".9"/><rect x="28.0" y="305.9" width="1.6" height="3.0" fill="#f08868" opacity=".9"/><rect x="54.1" y="318.8" width="2.3" height="2.3" fill="#e87050" opacity=".9"/><rect x="55.8" y="303.8" width="2.2" height="2.8" fill="#f08868" opacity=".9"/><rect x="37.4" y="286.4" width="3.3" height="1.7" fill="#f08868" opacity=".9"/><rect x="73.7" y="279.4" width="2.2" height="2.2" fill="#e87050" opacity=".9"/><rect x="23.0" y="285.9" width="1.8" height="2.1" fill="#e87050" opacity=".9"/><rect x="69.5" y="327.3" width="1.9" height="2.4" fill="#f08868" opacity=".9"/><rect x="51.7" y="291.8" width="3.8" height="2.1" fill="#e87050" opacity=".9"/><rect x="18.4" y="325.2" width="2.5" height="2.9" fill="#e87050" opacity=".9"/><rect x="55.1" y="285.3" width="3.6" height="2.6" fill="#f08868" opacity=".9"/><rect x="66.2" y="281.3" width="3.5" height="2.8" fill="#d86048" opacity=".9"/><rect x="74.8" y="313.8" width="2.1" height="2.1" fill="#d86048" opacity=".9"/><rect x="39.2" y="289.5" width="1.7" height="2.1" fill="#f08868" opacity=".9"/><rect x="47.9" y="304.9" width="2.6" height="2.1" fill="#f08868" opacity=".9"/><rect x="74.0" y="304.6" width="3.5" height="2.8" fill="#e87050" opacity=".9"/><rect x="56.0" y="301.1" width="3.8" height="2.4" fill="#d86048" opacity=".9"/><rect x="26.9" y="276.2" width="3.1" height="1.9" fill="#e87050" opacity=".9"/><rect x="30.8" y="302.0" width="2.2" height="2.0" fill="#e87050" opacity=".9"/><rect x="45.9" y="296.1" width="1.7" height="2.4" fill="#d86048" opacity=".9"/><rect x="71.6" y="295.2" width="3.7" height="2.9" fill="#f08868" opacity=".9"/><rect x="37.8" y="296.8" width="3.4" height="1.9" fill="#e87050" opacity=".9"/><rect x="22.5" y="314.6" width="3.1" height="1.8" fill="#f08868" opacity=".9"/><rect x="46.5" y="281.3" width="3.0" height="2.2" fill="#d86048" opacity=".9"/><rect x="46.5" y="320.2" width="2.0" height="2.3" fill="#f08868" opacity=".9"/><rect x="71.7" y="300.8" width="1.9" height="2.9" fill="#d86048" opacity=".9"/><rect x="44.0" y="322.5" width="2.2" height="3.0" fill="#d86048" opacity=".9"/><rect x="42.3" y="341.3" width="2.9" height="2.4" fill="#f08868" opacity=".9"/><rect x="35.1" y="331.3" width="3.6" height="2.0" fill="#f0a080" opacity=".9"/><rect x="54.0" y="278.4" width="2.5" height="2.5" fill="#f08868" opacity=".9"/><rect x="60.6" y="316.4" width="3.6" height="2.3" fill="#d86048" opacity=".9"/><rect x="49.7" y="268.8" width="2.2" height="2.4" fill="#f0a080" opacity=".9"/><rect x="31.0" y="279.7" width="3.7" height="1.5" fill="#f0a080" opacity=".9"/><rect x="54.6" y="275.9" width="2.5" height="3.0" fill="#f0a080" opacity=".9"/><rect x="75.0" y="339.6" width="3.7" height="2.4" fill="#d86048" opacity=".9"/><rect x="36.0" y="321.6" width="2.2" height="2.0" fill="#f0a080" opacity=".9"/><rect x="37.3" y="326.5" width="3.1" height="1.5" fill="#f0a080" opacity=".9"/><rect x="50.4" y="238.5" width="2.6" height="1.8" fill="#f0a080" opacity=".9"/><rect x="48.3" y="316.6" width="3.0" height="1.6" fill="#f0a080" opacity=".9"/><rect x="67.5" y="295.6" width="3.9" height="1.8" fill="#f08868" opacity=".9"/><rect x="12.7" y="326.6" width="1.6" height="1.9" fill="#e87050" opacity=".9"/><rect x="65.4" y="293.7" width="2.8" height="3.0" fill="#d86048" opacity=".9"/><rect x="28.0" y="302.1" width="2.5" height="2.0" fill="#f0a080" opacity=".9"/><rect x="36.6" y="293.5" width="3.2" height="2.3" fill="#e87050" opacity=".9"/><rect x="67.7" y="317.4" width="3.1" height="2.9" fill="#f0a080" opacity=".9"/><rect x="59.3" y="316.7" width="2.7" height="2.2" fill="#f0a080" opacity=".9"/><rect x="4.8" y="253.3" width="3.2" height="2.6" fill="#d86048" opacity=".9"/><rect x="67.9" y="316.4" width="3.9" height="2.7" fill="#d86048" opacity=".9"/><rect x="42.4" y="304.2" width="3.2" height="2.7" fill="#d86048" opacity=".9"/><rect x="93.8" y="302.2" width="3.1" height="2.3" fill="#f0a080" opacity=".9"/><rect x="57.5" y="291.3" width="2.5" height="1.6" fill="#f08868" opacity=".9"/><rect x="43.3" y="300.9" width="3.2" height="1.5" fill="#e87050" opacity=".9"/><rect x="83.5" y="305.6" width="3.8" height="2.1" fill="#e87050" opacity=".9"/><rect x="54.9" y="307.3" width="2.0" height="2.2" fill="#e87050" opacity=".9"/><rect x="37.1" y="299.3" width="2.9" height="2.1" fill="#f08868" opacity=".9"/><rect x="60.4" y="313.9" width="1.6" height="1.6" fill="#e87050" opacity=".9"/><rect x="74.0" y="296.8" width="3.0" height="2.7" fill="#f0a080" opacity=".9"/><rect x="54.9" y="306.3" width="1.9" height="1.9" fill="#d86048" opacity=".9"/><rect x="51.2" y="310.6" width="3.6" height="2.9" fill="#e87050" opacity=".9"/><rect x="64.0" y="310.5" width="1.5" height="1.8" fill="#f0a080" opacity=".9"/><rect x="25.0" y="327.7" width="2.6" height="2.4" fill="#e87050" opacity=".9"/><rect x="52.0" y="311.6" width="2.3" height="2.8" fill="#f08868" opacity=".9"/><rect x="58.8" y="287.9" width="3.9" height="2.2" fill="#d86048" opacity=".9"/><rect x="66.2" y="299.9" width="3.2" height="2.4" fill="#f0a080" opacity=".9"/><rect x="34.7" y="316.5" width="1.6" height="2.8" fill="#f0a080" opacity=".9"/><rect x="62.4" y="312.0" width="2.0" height="3.0" fill="#f0a080" opacity=".9"/><rect x="45.5" y="332.3" width="2.3" height="2.8" fill="#e87050" opacity=".9"/><rect x="37.1" y="332.4" width="2.6" height="2.9" fill="#e87050" opacity=".9"/><rect x="33.3" y="297.8" width="2.2" height="1.9" fill="#f0a080" opacity=".9"/><rect x="80.8" y="312.1" width="3.5" height="1.9" fill="#d86048" opacity=".9"/><rect x="61.1" y="315.6" width="2.9" height="2.2" fill="#f08868" opacity=".9"/><rect x="56.1" y="289.3" width="2.4" height="2.6" fill="#d86048" opacity=".9"/><rect x="15.9" y="343.8" width="2.2" height="2.2" fill="#f08868" opacity=".9"/><rect x="63.2" y="346.7" width="3.9" height="3.0" fill="#f08868" opacity=".9"/><rect x="34.3" y="291.6" width="2.8" height="2.1" fill="#d86048" opacity=".9"/><rect x="41.7" y="304.3" width="3.2" height="1.6" fill="#e87050" opacity=".9"/><rect x="71.5" y="276.2" width="1.6" height="2.6" fill="#f0a080" opacity=".9"/><rect x="54.1" y="308.0" width="3.2" height="2.7" fill="#e87050" opacity=".9"/><rect x="53.5" y="319.1" width="1.7" height="2.9" fill="#e87050" opacity=".9"/><rect x="63.5" y="270.1" width="1.7" height="2.0" fill="#f08868" opacity=".9"/><rect x="53.5" y="316.3" width="2.2" height="2.1" fill="#f0a080" opacity=".9"/><rect x="81.0" y="284.4" width="3.8" height="1.8" fill="#f08868" opacity=".9"/><rect x="28.0" y="334.3" width="3.7" height="1.5" fill="#d86048" opacity=".9"/><rect x="45.6" y="281.5" width="2.4" height="2.4" fill="#f0a080" opacity=".9"/><rect x="56.1" y="314.9" width="3.3" height="1.6" fill="#f08868" opacity=".9"/><rect x="63.5" y="308.3" width="3.4" height="1.7" fill="#f08868" opacity=".9"/><rect x="50.1" y="277.2" width="2.9" height="1.8" fill="#f08868" opacity=".9"/><rect x="27.7" y="305.4" width="3.2" height="2.4" fill="#f0a080" opacity=".9"/><rect x="61.0" y="300.8" width="3.8" height="2.8" fill="#d86048" opacity=".9"/><rect x="25.4" y="287.7" width="3.2" height="1.6" fill="#f08868" opacity=".9"/><rect x="37.5" y="339.6" width="3.4" height="1.6" fill="#d86048" opacity=".9"/><rect x="45.2" y="284.3" width="2.2" height="1.6" fill="#f08868" opacity=".9"/><rect x="71.8" y="297.4" width="3.2" height="2.6" fill="#d86048" opacity=".9"/><rect x="65.6" y="277.9" width="2.8" height="2.5" fill="#f0a080" opacity=".9"/><rect x="60.2" y="336.6" width="2.7" height="1.8" fill="#f08868" opacity=".9"/><rect x="87.7" y="292.9" width="1.9" height="1.7" fill="#d86048" opacity=".9"/><rect x="54.8" y="289.2" width="2.1" height="1.6" fill="#d86048" opacity=".9"/><rect x="39.1" y="322.7" width="3.1" height="1.7" fill="#f08868" opacity=".9"/><rect x="43.0" y="281.6" width="2.1" height="1.9" fill="#f0a080" opacity=".9"/><rect x="30.4" y="302.7" width="3.2" height="1.7" fill="#d86048" opacity=".9"/><rect x="45.0" y="276.7" width="2.3" height="2.7" fill="#f08868" opacity=".9"/><rect x="19.7" y="293.9" width="3.2" height="1.7" fill="#f08868" opacity=".9"/><rect x="89.9" y="299.5" width="3.6" height="1.7" fill="#f0a080" opacity=".9"/><rect x="47.4" y="325.2" width="1.6" height="2.8" fill="#f08868" opacity=".9"/><rect x="105.7" y="329.1" width="2.6" height="1.7" fill="#d86048" opacity=".9"/><rect x="100.9" y="340.1" width="2.2" height="2.3" fill="#d86048" opacity=".9"/><rect x="123.1" y="326.4" width="1.7" height="2.6" fill="#f0a080" opacity=".9"/><rect x="125.9" y="316.8" width="3.1" height="2.9" fill="#e87050" opacity=".9"/><rect x="83.6" y="322.6" width="1.5" height="2.9" fill="#d86048" opacity=".9"/><rect x="95.9" y="297.8" width="3.1" height="1.6" fill="#d86048" opacity=".9"/><rect x="107.9" y="315.5" width="3.6" height="1.9" fill="#f0a080" opacity=".9"/><rect x="115.8" y="346.2" width="1.8" height="2.6" fill="#f08868" opacity=".9"/><rect x="100.8" y="345.7" width="2.0" height="2.7" fill="#f0a080" opacity=".9"/><rect x="102.3" y="337.3" width="3.6" height="1.9" fill="#d86048" opacity=".9"/><rect x="114.2" y="323.4" width="3.8" height="2.9" fill="#f0a080" opacity=".9"/><rect x="91.5" y="320.8" width="4.0" height="2.4" fill="#f08868" opacity=".9"/><rect x="102.6" y="312.1" width="1.9" height="2.2" fill="#f08868" opacity=".9"/><rect x="114.0" y="318.4" width="3.6" height="2.2" fill="#e87050" opacity=".9"/><rect x="110.7" y="338.9" width="3.6" height="2.8" fill="#e87050" opacity=".9"/><rect x="111.4" y="299.5" width="1.7" height="1.6" fill="#d86048" opacity=".9"/><rect x="100.8" y="279.2" width="2.6" height="2.5" fill="#e87050" opacity=".9"/><rect x="121.9" y="281.6" width="2.4" height="1.5" fill="#f08868" opacity=".9"/><rect x="115.0" y="291.7" width="2.7" height="2.3" fill="#f08868" opacity=".9"/><rect x="93.3" y="317.8" width="3.9" height="2.9" fill="#f08868" opacity=".9"/><rect x="89.4" y="295.0" width="3.3" height="2.0" fill="#e87050" opacity=".9"/><rect x="98.2" y="298.3" width="3.9" height="2.2" fill="#f0a080" opacity=".9"/><rect x="100.9" y="306.5" width="2.8" height="2.5" fill="#d86048" opacity=".9"/><rect x="113.7" y="308.4" width="3.2" height="1.7" fill="#f0a080" opacity=".9"/><rect x="92.3" y="307.9" width="2.4" height="1.9" fill="#f0a080" opacity=".9"/><rect x="97.8" y="325.6" width="2.0" height="2.8" fill="#f08868" opacity=".9"/><rect x="101.5" y="317.1" width="3.1" height="1.8" fill="#d86048" opacity=".9"/><rect x="97.4" y="292.4" width="2.9" height="1.8" fill="#f08868" opacity=".9"/><rect x="101.8" y="315.7" width="3.6" height="2.5" fill="#e87050" opacity=".9"/><rect x="110.3" y="309.8" width="3.1" height="2.9" fill="#e87050" opacity=".9"/><rect x="92.5" y="317.9" width="2.9" height="3.0" fill="#f0a080" opacity=".9"/><rect x="113.7" y="341.2" width="1.8" height="2.7" fill="#e87050" opacity=".9"/><rect x="117.6" y="325.2" width="1.6" height="2.6" fill="#d86048" opacity=".9"/><rect x="122.9" y="313.9" width="3.3" height="2.1" fill="#e87050" opacity=".9"/><rect x="122.9" y="302.1" width="2.9" height="2.9" fill="#f08868" opacity=".9"/><rect x="113.8" y="311.2" width="3.5" height="2.6" fill="#d86048" opacity=".9"/><rect x="118.7" y="321.1" width="2.4" height="2.6" fill="#f08868" opacity=".9"/><rect x="129.2" y="309.7" width="3.5" height="2.0" fill="#e87050" opacity=".9"/><rect x="100.3" y="334.0" width="1.6" height="2.9" fill="#e87050" opacity=".9"/><rect x="108.6" y="338.7" width="1.6" height="3.0" fill="#f0a080" opacity=".9"/><rect x="85.0" y="333.1" width="1.8" height="2.7" fill="#f0a080" opacity=".9"/><rect x="115.0" y="343.4" width="3.7" height="2.5" fill="#d86048" opacity=".9"/><rect x="117.6" y="297.2" width="2.8" height="2.5" fill="#d86048" opacity=".9"/><rect x="120.2" y="274.5" width="1.6" height="3.0" fill="#e87050" opacity=".9"/><rect x="91.9" y="321.9" width="3.5" height="1.6" fill="#e87050" opacity=".9"/><rect x="118.7" y="353.6" width="3.6" height="3.0" fill="#f0a080" opacity=".9"/><rect x="102.6" y="299.6" width="3.7" height="2.4" fill="#f08868" opacity=".9"/><rect x="119.1" y="328.2" width="2.3" height="1.7" fill="#f08868" opacity=".9"/><rect x="101.2" y="310.3" width="3.3" height="2.0" fill="#d86048" opacity=".9"/><rect x="75.7" y="329.3" width="1.5" height="2.4" fill="#d86048" opacity=".9"/><rect x="106.6" y="323.5" width="3.7" height="2.4" fill="#f0a080" opacity=".9"/><rect x="92.6" y="296.4" width="2.2" height="1.9" fill="#f08868" opacity=".9"/><rect x="97.1" y="320.0" width="4.0" height="1.6" fill="#f08868" opacity=".9"/><rect x="85.7" y="307.2" width="3.4" height="2.4" fill="#f08868" opacity=".9"/><rect x="99.2" y="305.8" width="3.5" height="1.9" fill="#d86048" opacity=".9"/><rect x="110.2" y="309.4" width="2.3" height="2.6" fill="#e87050" opacity=".9"/><rect x="106.9" y="296.2" width="2.4" height="2.3" fill="#f08868" opacity=".9"/><rect x="103.9" y="323.9" width="3.2" height="2.8" fill="#d86048" opacity=".9"/><rect x="111.4" y="296.8" width="3.5" height="3.0" fill="#f08868" opacity=".9"/><rect x="113.5" y="331.0" width="2.5" height="2.1" fill="#f0a080" opacity=".9"/><rect x="112.5" y="274.4" width="1.9" height="2.6" fill="#e87050" opacity=".9"/><rect x="107.8" y="346.0" width="1.7" height="1.8" fill="#d86048" opacity=".9"/><rect x="124.5" y="307.9" width="3.0" height="3.0" fill="#d86048" opacity=".9"/><rect x="93.0" y="347.0" width="3.3" height="2.9" fill="#f0a080" opacity=".9"/><rect x="114.5" y="305.1" width="2.2" height="1.9" fill="#f08868" opacity=".9"/><rect x="116.3" y="321.7" width="2.1" height="1.5" fill="#d86048" opacity=".9"/><rect x="122.6" y="326.4" width="3.7" height="2.5" fill="#d86048" opacity=".9"/><rect x="115.5" y="350.7" width="3.0" height="1.6" fill="#f08868" opacity=".9"/><rect x="118.4" y="282.0" width="3.3" height="1.5" fill="#d86048" opacity=".9"/><rect x="105.4" y="348.4" width="3.1" height="2.9" fill="#e87050" opacity=".9"/><rect x="110.9" y="337.3" width="3.1" height="2.1" fill="#e87050" opacity=".9"/><rect x="102.5" y="303.6" width="3.7" height="2.7" fill="#e87050" opacity=".9"/><rect x="124.5" y="334.4" width="4.0" height="2.1" fill="#f0a080" opacity=".9"/><rect x="134.5" y="305.1" width="3.8" height="2.3" fill="#e87050" opacity=".9"/><rect x="112.7" y="319.5" width="1.9" height="1.5" fill="#d86048" opacity=".9"/><rect x="112.2" y="343.8" width="2.4" height="2.0" fill="#e87050" opacity=".9"/><rect x="96.2" y="345.1" width="3.1" height="2.4" fill="#f08868" opacity=".9"/><rect x="96.8" y="348.7" width="3.5" height="2.2" fill="#d86048" opacity=".9"/><rect x="127.8" y="325.7" width="2.9" height="2.0" fill="#f0a080" opacity=".9"/><rect x="97.0" y="317.0" width="1.5" height="2.2" fill="#d86048" opacity=".9"/><rect x="94.5" y="291.4" width="1.9" height="2.4" fill="#d86048" opacity=".9"/><rect x="76.4" y="352.5" width="3.1" height="1.7" fill="#e87050" opacity=".9"/><rect x="98.9" y="316.4" width="2.1" height="2.4" fill="#f08868" opacity=".9"/><rect x="105.6" y="276.9" width="2.8" height="2.0" fill="#f08868" opacity=".9"/><rect x="104.2" y="299.1" width="2.0" height="2.9" fill="#f0a080" opacity=".9"/><rect x="119.3" y="308.4" width="2.3" height="2.9" fill="#f08868" opacity=".9"/><rect x="125.7" y="340.4" width="3.5" height="2.9" fill="#e87050" opacity=".9"/><rect x="102.0" y="303.5" width="2.9" height="2.1" fill="#f08868" opacity=".9"/><rect x="137.5" y="296.6" width="1.6" height="1.5" fill="#f08868" opacity=".9"/><rect x="105.4" y="305.6" width="2.0" height="2.6" fill="#d86048" opacity=".9"/><rect x="100.6" y="306.8" width="2.0" height="2.4" fill="#f0a080" opacity=".9"/><rect x="123.4" y="353.2" width="3.9" height="1.7" fill="#d86048" opacity=".9"/><rect x="106.1" y="328.2" width="2.7" height="2.8" fill="#e87050" opacity=".9"/><rect x="119.2" y="345.8" width="2.0" height="1.6" fill="#f0a080" opacity=".9"/><rect x="113.5" y="281.7" width="1.6" height="2.7" fill="#d86048" opacity=".9"/><rect x="94.1" y="328.0" width="4.0" height="1.9" fill="#f08868" opacity=".9"/><rect x="114.7" y="321.5" width="1.8" height="2.0" fill="#e87050" opacity=".9"/><rect x="95.0" y="319.7" width="2.7" height="2.1" fill="#f08868" opacity=".9"/><rect x="90.8" y="334.7" width="3.7" height="3.0" fill="#f0a080" opacity=".9"/><rect x="118.0" y="323.0" width="1.6" height="2.3" fill="#e87050" opacity=".9"/><rect x="109.7" y="341.1" width="3.3" height="1.6" fill="#e87050" opacity=".9"/><rect x="112.0" y="315.5" width="1.8" height="2.2" fill="#e87050" opacity=".9"/><rect x="117.7" y="335.9" width="2.1" height="2.3" fill="#f08868" opacity=".9"/><rect x="96.2" y="301.3" width="2.8" height="2.8" fill="#e87050" opacity=".9"/><rect x="113.4" y="317.9" width="3.6" height="3.0" fill="#f08868" opacity=".9"/><rect x="108.9" y="327.6" width="1.5" height="1.9" fill="#f08868" opacity=".9"/><rect x="117.1" y="317.2" width="2.5" height="2.3" fill="#e87050" opacity=".9"/><rect x="106.7" y="322.2" width="3.1" height="2.3" fill="#e87050" opacity=".9"/><rect x="87.6" y="310.8" width="2.5" height="2.0" fill="#d86048" opacity=".9"/><rect x="75.1" y="346.1" width="3.4" height="2.8" fill="#f0a080" opacity=".9"/><rect x="117.9" y="279.7" width="2.1" height="2.3" fill="#e87050" opacity=".9"/><rect x="129.5" y="317.8" width="4.0" height="2.7" fill="#f0a080" opacity=".9"/><rect x="104.9" y="312.7" width="3.8" height="1.6" fill="#e87050" opacity=".9"/><rect x="103.7" y="303.4" width="2.9" height="2.0" fill="#f0a080" opacity=".9"/><rect x="108.6" y="319.8" width="2.8" height="2.4" fill="#f0a080" opacity=".9"/><rect x="118.2" y="319.5" width="2.4" height="1.6" fill="#f0a080" opacity=".9"/><rect x="118.9" y="317.6" width="1.7" height="2.7" fill="#d86048" opacity=".9"/><rect x="91.7" y="281.0" width="2.2" height="2.8" fill="#d86048" opacity=".9"/><rect x="116.1" y="305.6" width="2.9" height="3.0" fill="#f0a080" opacity=".9"/><rect x="129.6" y="333.5" width="2.8" height="2.3" fill="#d86048" opacity=".9"/><circle cx="129.3" cy="450.7" r=".8" fill="#b0b8c8" opacity=".7"/><circle cx="27.4" cy="672.3" r=".8" fill="#b0b8c8" opacity=".7"/><circle cx="73.2" cy="603.4" r=".8" fill="#b0b8c8" opacity=".7"/><circle cx="131.6" cy="699.7" r=".8" fill="#b0b8c8" opacity=".7"/><circle cx="138.0" cy="376.4" r=".8" fill="#b0b8c8" opacity=".7"/><circle cx="60.6" cy="676.2" r=".8" fill="#b0b8c8" opacity=".7"/><circle cx="130.0" cy="406.8" r=".8" fill="#b0b8c8" opacity=".7"/><circle cx="24.5" cy="455.6" r=".8" fill="#b0b8c8" opacity=".7"/><circle cx="16.3" cy="495.5" r=".8" fill="#b0b8c8" opacity=".7"/><circle cx="127.7" cy="558.1" r=".8" fill="#b0b8c8" opacity=".7"/><circle cx="72.0" cy="393.4" r=".8" fill="#b0b8c8" opacity=".7"/><circle cx="62.9" cy="738.8" r=".8" fill="#b0b8c8" opacity=".7"/><circle cx="110.5" cy="530.7" r=".8" fill="#b0b8c8" opacity=".7"/><circle cx="76.1" cy="663.3" r=".8" fill="#b0b8c8" opacity=".7"/><circle cx="120.6" cy="417.0" r=".8" fill="#b0b8c8" opacity=".7"/><circle cx="108.1" cy="499.4" r=".8" fill="#b0b8c8" opacity=".7"/><circle cx="82.8" cy="450.3" r=".8" fill="#b0b8c8" opacity=".7"/><circle cx="59.0" cy="489.2" r=".8" fill="#b0b8c8" opacity=".7"/><circle cx="60.6" cy="366.8" r=".8" fill="#b0b8c8" opacity=".7"/><circle cx="31.9" cy="576.8" r=".8" fill="#b0b8c8" opacity=".7"/><circle cx="9.2" cy="427.8" r=".8" fill="#b0b8c8" opacity=".7"/><circle cx="114.2" cy="464.3" r=".8" fill="#b0b8c8" opacity=".7"/><circle cx="51.5" cy="451.9" r=".8" fill="#b0b8c8" opacity=".7"/><circle cx="132.6" cy="394.7" r=".8" fill="#b0b8c8" opacity=".7"/><circle cx="101.1" cy="686.4" r=".8" fill="#b0b8c8" opacity=".7"/><circle cx="32.1" cy="520.8" r=".8" fill="#b0b8c8" opacity=".7"/><circle cx="126.0" cy="594.8" r=".8" fill="#b0b8c8" opacity=".7"/><circle cx="59.1" cy="376.7" r=".8" fill="#b0b8c8" opacity=".7"/><circle cx="70.4" cy="499.5" r=".8" fill="#b0b8c8" opacity=".7"/><circle cx="113.3" cy="472.2" r=".8" fill="#b0b8c8" opacity=".7"/><circle cx="64.9" cy="606.3" r=".8" fill="#b0b8c8" opacity=".7"/><circle cx="128.9" cy="493.9" r=".8" fill="#b0b8c8" opacity=".7"/><circle cx="61.3" cy="579.9" r=".8" fill="#b0b8c8" opacity=".7"/><circle cx="147.0" cy="432.8" r=".8" fill="#b0b8c8" opacity=".7"/><circle cx="154.4" cy="630.5" r=".8" fill="#b0b8c8" opacity=".7"/><circle cx="59.2" cy="612.9" r=".8" fill="#b0b8c8" opacity=".7"/><circle cx="52.4" cy="386.9" r=".8" fill="#b0b8c8" opacity=".7"/><circle cx="120.2" cy="504.2" r=".8" fill="#b0b8c8" opacity=".7"/><circle cx="83.6" cy="548.7" r=".8" fill="#b0b8c8" opacity=".7"/><circle cx="143.3" cy="647.7" r=".8" fill="#b0b8c8" opacity=".7"/><circle cx="4.1" cy="585.3" r=".8" fill="#b0b8c8" opacity=".7"/><circle cx="73.5" cy="535.6" r=".8" fill="#b0b8c8" opacity=".7"/><circle cx="133.5" cy="517.7" r=".8" fill="#b0b8c8" opacity=".7"/><circle cx="75.3" cy="698.3" r=".8" fill="#b0b8c8" opacity=".7"/><circle cx="69.9" cy="546.7" r=".8" fill="#b0b8c8" opacity=".7"/><circle cx="81.4" cy="673.4" r=".8" fill="#b0b8c8" opacity=".7"/><circle cx="106.6" cy="641.4" r=".8" fill="#b0b8c8" opacity=".7"/><circle cx="63.9" cy="375.4" r=".8" fill="#b0b8c8" opacity=".7"/><circle cx="108.1" cy="570.5" r=".8" fill="#b0b8c8" opacity=".7"/><circle cx="122.3" cy="652.6" r=".8" fill="#b0b8c8" opacity=".7"/><circle cx="18.8" cy="443.9" r=".8" fill="#b0b8c8" opacity=".7"/><circle cx="12.3" cy="670.6" r=".8" fill="#b0b8c8" opacity=".7"/><circle cx="16.2" cy="393.5" r=".8" fill="#b0b8c8" opacity=".7"/><circle cx="119.8" cy="574.5" r=".8" fill="#b0b8c8" opacity=".7"/><circle cx="8.7" cy="618.8" r=".8" fill="#b0b8c8" opacity=".7"/><circle cx="113.1" cy="543.5" r=".8" fill="#b0b8c8" opacity=".7"/><circle cx="8.7" cy="622.6" r=".8" fill="#b0b8c8" opacity=".7"/><circle cx="66.4" cy="581.9" r=".8" fill="#b0b8c8" opacity=".7"/><circle cx="158.7" cy="670.4" r=".8" fill="#b0b8c8" opacity=".7"/><circle cx="138.6" cy="415.3" r=".8" fill="#b0b8c8" opacity=".7"/>
<rect x="0" y="560" width="159" height="440" fill="url(#wfade)"/>
<g fill="#c8283a">
<path d="M0 772 L159 776 V780 L0 776z"/><path d="M0 799 L159 803 V807 L0 803z"/><path d="M0 849 L159 852 V856 L0 853z"/><path d="M0 876 L159 880 V884 L0 880z"/>
</g>
<path d="M99 748 L110 745 L106 760 L106 985 L99 985 Z" fill="#a8283c"/>
<path d="M100 748 L108 746 L106 800 L101 800z" fill="#d03a70"/>
<path d="M0 990 L159 1016 V1251 H0z" fill="#0a0e1c"/>
<path d="M0 995 L159 1022 V1045 L0 1018z" fill="#45264e"/>
<path d="M0 972 L159 997 V1000 L0 975z" fill="#d8303c"/>
<path d="M0 989 L159 1016 V1018 L0 991z" fill="#b84048"/>
<path d="M0 1010 L159 1039 V1042 L0 1013z" fill="#d03a48"/>
<path d="M10 1045 L60 1050 L90 1070 L40 1075z" fill="#1a3470" opacity=".7"/>
<path d="M60 1060 L130 1068 L150 1085 L80 1090z" fill="#14286a" opacity=".7"/>
<path d="M0 1080 L159 1075 V1251 H0z" fill="#0c1430"/>
</svg>
<div class="a" style="left:1560px;top:0px;width:7px;height:9px;background:#fff"></div>
<div class="t" style="left:1549px;top:15.5px;color:#fff;font-size:12px;letter-spacing:-.15px">表書.xls</div>
<div class="t" style="left:1620px;top:15.5px;color:#fff;font-size:12px;letter-spacing:-.15px">TeaExtractor</div>
<div class="t" style="left:1557px;top:114.5px;color:#fff;font-size:12px;letter-spacing:-.15px">Master</div>
<div class="a" style="left:1659px;top:907px;width:36px;height:36px;border-radius:50%;background:#f0eeee;border:2px solid #d8d8d8"></div>
<div class="a" style="left:1668px;top:913px;width:18px;height:22px;background:#5a3a30;border-radius:9px 9px 4px 4px"></div>
<div class="a" style="left:1671px;top:917px;width:12px;height:14px;background:#f2d0c0;border-radius:6px"></div>
<div class="a" style="left:1669px;top:933px;width:16px;height:6px;background:#222;border-radius:6px 6px 0 0"></div>
<svg style="left:0px;top:1147px;" width="640" height="104" viewBox="0 0 640 104">
<defs><filter id="bb"><feGaussianBlur stdDeviation="1.5"/></filter>
<linearGradient id="blg" x1="0" y1="0" x2="1" y2="0"><stop offset="0" stop-color="#3c4254"/><stop offset=".3" stop-color="#4a4862"/><stop offset=".6" stop-color="#504664"/><stop offset=".82" stop-color="#6c4c60"/><stop offset=".92" stop-color="#8a4e4c"/><stop offset="1" stop-color="#b45a3c"/></linearGradient></defs>
<rect x="0" y="0" width="640" height="104" fill="url(#blg)"/>
<g filter="url(#bb)">
<path d="M0 0 H150 L220 6 L264 10 L250 22 L200 40 L150 50 L90 52 L0 52z" fill="#2e3240"/>
<path d="M0 8 H90 L120 12 L60 16 L0 14z" fill="#8a8a90" opacity=".7"/>
<path d="M20 0 H56 L52 11 L22 11z" fill="#e07030"/>
<path d="M0 30 L60 32 L80 40 L40 46 L0 44z" fill="#b89040"/>
<path d="M90 24 L170 22 L160 30 L100 32z" fill="#6a5a50" opacity=".8"/>
<path d="M0 50 L60 48 L110 55 L140 62 L130 80 L90 96 L40 104 L0 104z" fill="#426c82"/>
<path d="M20 56 L60 54 L80 62 L40 68z" fill="#e08050" opacity=".8"/>
<path d="M0 74 L50 74 L48 80 L0 80z" fill="#d8c8b0" opacity=".8"/>
<path d="M40 80 L80 78 L75 88 L45 90z" fill="#222630"/>
<path d="M200 6 L262 8 L240 22 L190 26z" fill="#2a3448"/>
<path d="M210 10 L255 8 L235 18z" fill="#e8e8f0" opacity=".8"/>
<path d="M132 44 L200 40 L270 42 L280 50 L200 54 L140 54z" fill="#2a2c36"/>
<path d="M160 48 L190 47 L188 53 L162 53z" fill="#5ab0a8"/>
<path d="M226 45 L245 44 L244 49 L227 49z" fill="#f0a030"/>
<path d="M230 49 L276 48 L270 54 L232 54z" fill="#e8e8e8" opacity=".8"/>
<path d="M120 62 L140 62 L142 68 L120 68z" fill="#f0e0c0" opacity=".8"/>
<path d="M120 88 L145 90 L140 96 L120 94z" fill="#f09060"/>
<path d="M180 70 L200 72 L196 78 L182 76z" fill="#e04040" opacity=".8"/>
<path d="M141 90 L320 86 L320 104 L141 104z" fill="#3a4a62" opacity=".8"/>
<path d="M320 72 L380 68 L400 80 L380 104 L320 104z" fill="#426c82"/>
<path d="M352 50 L400 42 L440 44 L452 60 L440 78 L390 80 L360 76z" fill="#4a7890"/>
<path d="M378 64 L420 48 L436 52 L410 66 L386 72z" fill="#e8d8a8" opacity=".9"/>
<path d="M425 6 L470 8 L520 12 L500 20 L460 22 L440 16z" fill="#e8c040"/>
<path d="M410 26 L470 24 L460 34 L420 34z" fill="#c8a040" opacity=".7"/>
<path d="M448 38 L500 36 L540 38 L535 46 L500 54 L450 60 L455 48z" fill="#f0ece8"/>
<path d="M508 66 L610 66 L640 70 L636 80 L520 82z" fill="#e8d8d0" opacity=".9"/>
<path d="M470 86 L560 84 L600 92 L480 96z" fill="#d8c0b0" opacity=".7"/>
<path d="M570 64 L600 62 L598 70 L572 70z" fill="#f0a040"/>
<path d="M600 68 L640 66 L640 74 L604 74z" fill="#f0b040" opacity=".8"/>
</g>
<path d="M578 0 H596 L594 30 L598 60 L592 104 H582 L580 60z" fill="#3a2a34" opacity=".85"/>
</svg>
<div class="a" style="left:0px;top:1084px;width:640px;height:63px;background:#fff"></div>
<div class="t" style="left:0px;top:1128.5px;color:#333;font-size:12px">3 個の項目</div>
<div class="t" style="left:73px;top:1128.5px;color:#333;font-size:12px">1 個の項目を選択&nbsp;&nbsp;48 バイト</div>
<div class="a" style="left:0px;top:0px;width:5px;height:1084px;background:linear-gradient(#7a3a3a 0,#c06040 100px,#4a6a70 200px,#9a9a9a 240px,#e8e8e8 300px,#fff 600px,#fff 1084px)"></div>
<div class="a" style="left:4px;top:0;width:1556px;height:1084px;background:#2c3c5a;border-radius:8px 0 6px 6px;overflow:hidden;box-shadow:0 2px 6px rgba(0,0,0,.35)">
</div>
<div class="a" style="left:4px;top:0px;width:1556px;height:30px;background:#f3f3f3;border-radius:8px 0 0 0"></div>
<svg style="left:11px;top:5px;" width="20" height="20" viewBox="0 0 20 20"><circle cx="10" cy="3" r="2" fill="#3a5a6a"/><rect x="9" y="3" width="2" height="4" fill="#3a5a6a"/><ellipse cx="10" cy="12" rx="8.5" ry="7" fill="#2a6478"/><path d="M5 12 q2-3 4 0 M11 12 q2-3 4 0" stroke="#fff" stroke-width="1.5" fill="none"/><rect x="8" y="15" width="4" height="1.5" fill="#bfe" /></svg>
<div class="t" style="left:34px;top:8.5px;color:#8c8c8c;font-size:13px">OpenRPA</div>
<div class="a" style="left:1441px;top:14px;width:11px;height:1px;background:#8a8a8a"></div>
<div class="a" style="left:1485px;top:8px;width:11px;height:11px;border:1px solid #8a8a8a"></div>
<svg style="left:1531px;top:8px;" width="12" height="12" viewBox="0 0 12 12"><path d="M0.5 0.5 L11.5 11.5 M11.5 0.5 L0.5 11.5" stroke="#8a8a8a" stroke-width="1.1"/></svg>
<div class="a" style="left:4px;top:30px;width:1556px;height:26px;background:linear-gradient(#e4edf8,#d9e5f3);border-top:1px solid #c8d5e6"></div>
<div class="a" style="left:4px;top:31px;width:56px;height:23px;background:linear-gradient(#5b8ad6 0,#3a6cc0 45%,#2456b0 50%,#3f74cc 100%);border:1px solid #1f4a9a"></div>
<svg style="left:18px;top:35px;" width="28" height="16" viewBox="0 0 28 16"><rect x="6" y="1" width="9" height="13" fill="#e8ecef" stroke="#b8c0c0" stroke-width=".6"/><path d="M2 7.5 h7" stroke="#3cae5a" stroke-width="2"/><path d="M1 7.5 l3-3 v6z" fill="#3cae5a"/><path d="M20 5 h7 l-3.5 4z" fill="#fff"/></svg>
<div class="a" style="left:63px;top:32px;width:62px;height:24px;background:linear-gradient(#ffffff,#f6f9fd);border:1px solid #c5d2e2;border-bottom:none;border-radius:2px 2px 0 0"></div>
<div class="t" style="left:74px;top:38.5px;font-size:12px;letter-spacing:-.15px;color:#222">General</div>
<div class="t" style="left:141px;top:38.5px;font-size:12px;letter-spacing:-.15px;color:#222">Settings</div>
<div class="t" style="left:210px;top:38.5px;font-size:12px;letter-spacing:-.15px;color:#222">Tools</div>
<div class="a" style="left:4px;top:55px;width:1556px;height:91px;background:linear-gradient(#fdfeff 0,#f3f7fc 40%,#e9eff8 100%);border-bottom:1px solid #b7c4d6"></div>
<div class="a" style="left:4px;top:146px;width:1556px;height:4px;background:#f4f6fa"></div>
<div class="a" style="left:437px;top:62px;width:1px;height:78px;background:linear-gradient(rgba(190,194,200,.3),#bcc0c6 15%,#bcc0c6 85%,rgba(190,194,200,.3))"></div>
<div class="a" style="left:438px;top:62px;width:1px;height:78px;background:rgba(255,255,255,.8)"></div>
<div class="a" style="left:680px;top:62px;width:1px;height:78px;background:linear-gradient(rgba(190,194,200,.3),#bcc0c6 15%,#bcc0c6 85%,rgba(190,194,200,.3))"></div>
<div class="a" style="left:681px;top:62px;width:1px;height:78px;background:rgba(255,255,255,.8)"></div>
<div class="a" style="left:774px;top:62px;width:1px;height:78px;background:linear-gradient(rgba(190,194,200,.3),#bcc0c6 15%,#bcc0c6 85%,rgba(190,194,200,.3))"></div>
<div class="a" style="left:775px;top:62px;width:1px;height:78px;background:rgba(255,255,255,.8)"></div>
<div class="t" style="left:211px;top:127.5px;color:#9aa2ac;font-size:12px">Files</div>
<div class="t" style="left:538px;top:127.5px;color:#9aa2ac;font-size:12px">Runtime</div>
<div class="t" style="left:711px;top:127.5px;color:#9aa2ac;font-size:12px">Search</div>
<div class="t" style="left:-6px;top:97px;width:80px;text-align:center;font-size:12px;letter-spacing:-.15px;color:#222">New</div>
<div class="t" style="left:38px;top:97px;width:80px;text-align:center;font-size:12px;letter-spacing:-.15px;color:#a8adb4">Save</div>
<div class="t" style="left:82px;top:97px;width:80px;text-align:center;font-size:12px;letter-spacing:-.15px;color:#a8adb4">Open</div>
<div class="t" style="left:126px;top:97px;width:80px;text-align:center;font-size:12px;letter-spacing:-.15px;color:#222">Copy</div>
<div class="t" style="left:170px;top:97px;width:80px;text-align:center;font-size:12px;letter-spacing:-.15px;color:#a8adb4">Delete</div>
<div class="t" style="left:226px;top:97px;width:80px;text-align:center;font-size:12px;letter-spacing:-.15px;color:#222">Permissions</div>
<div class="t" style="left:282px;top:97px;width:80px;text-align:center;font-size:12px;letter-spacing:-.15px;color:#222">Reload</div>
<div class="t" style="left:326px;top:97px;width:80px;text-align:center;font-size:12px;letter-spacing:-.15px;color:#222">Import</div>
<div class="t" style="left:370px;top:97px;width:80px;text-align:center;font-size:12px;letter-spacing:-.15px;color:#222">Export</div>
<div class="t" style="left:428px;top:97px;width:80px;text-align:center;font-size:12px;letter-spacing:-.15px;color:#222">Play</div>
<div class="t" style="left:472px;top:97px;width:80px;text-align:center;font-size:12px;letter-spacing:-.15px;color:#a8adb4">Stop</div>
<div class="t" style="left:516px;top:97px;width:80px;text-align:center;font-size:12px;letter-spacing:-.15px;color:#222">Record</div>
<svg style="left:32px;top:114px;" width="6" height="4" viewBox="0 0 6 4"><path d="M0 0h6l-3 3.5z" fill="#222"/></svg>
<svg style="left:20px;top:62px;" width="30" height="34" viewBox="0 0 30 34"><path d="M2 1 h17 l7 7 v23 h-24z" fill="url(#gd)" stroke="#6e7378" stroke-width="1.2"/><path d="M19 1 v7 h7" fill="#dfe3e8" stroke="#6e7378" stroke-width="1"/><defs><linearGradient id="gd" x1="0" y1="0" x2="1" y2="1"><stop offset="0" stop-color="#fafbfc"/><stop offset="1" stop-color="#d7dde5"/></linearGradient></defs></svg>
<svg style="left:62px;top:62px;" width="32" height="32" viewBox="0 0 32 32"><rect x="1" y="1" width="29" height="29" rx="2" fill="#8dbbe0"/><rect x="7" y="1" width="16" height="9" fill="#c9c9c9"/><rect x="4" y="15" width="23" height="15" fill="#fafafa"/><rect x="4" y="27" width="23" height="2" fill="#e8908a"/></svg>
<svg style="left:106px;top:64px;" width="32" height="30" viewBox="0 0 32 30"><path d="M1 2 h9 l3 3 h16 v22 h-28z" fill="#efe0a8"/><path d="M1 10 h29 v17 h-29z" fill="#f6e6a0"/></svg>
<svg style="left:151px;top:62px;" width="30" height="32" viewBox="0 0 30 32"><path d="M1 1 h14 l5 5 v18 h-19z" fill="#f0f2f5" stroke="#6e7378" stroke-width="1.1"/><path d="M7 7 h14 l6 6 v19 h-20z" fill="#eef1f5" stroke="#555" stroke-width="1.2"/><path d="M10 15 h13 M10 19 h13 M10 23 h13 M10 27 h13" stroke="#b0bccb" stroke-width="1"/></svg>
<svg style="left:194px;top:63px;" width="32" height="30" viewBox="0 0 32 30"><path d="M3 5 L27 27 M27 5 L3 27" stroke="#c86068" stroke-width="8.5" stroke-linecap="round"/><path d="M3 5 L27 27 M27 5 L3 27" stroke="#ec8c92" stroke-width="6" stroke-linecap="round"/></svg>
<svg style="left:249px;top:62px;" width="34" height="34" viewBox="0 0 34 34"><defs><linearGradient id="pg" x1="0" y1="0" x2="1" y2="1"><stop offset="0" stop-color="#f4b040"/><stop offset="1" stop-color="#e89020"/></linearGradient></defs><path d="M17 1 L33 17 L17 33 L1 17z" fill="url(#pg)" stroke="#d88a20" stroke-width="1"/><path d="M12 10 L17 14 L14 18 L20 22 L17 27" stroke="#fbd898" stroke-width="2" fill="none"/><path d="M20 8 L24 13 M22 18 L27 17" stroke="#fbd898" stroke-width="1.5"/></svg>
<svg style="left:306px;top:62px;" width="32" height="32" viewBox="0 0 32 32"><path d="M21.75 23.96 A11.5 11.5 0 1 0 5.2 17.9" stroke="#1a78c8" stroke-width="7" fill="none"/><path d="M0 17 L15 19 L9 31z" fill="#1a78c8"/><path d="M9 24 L15 15" stroke="#1a78c8" stroke-width="4"/><path d="M21.75 23.96 A11.5 11.5 0 1 0 5.2 17.9" stroke="#4aa0e0" stroke-width="2" fill="none" opacity=".5"/></svg>
<svg style="left:350px;top:62px;" width="32" height="34" viewBox="0 0 32 34"><path d="M6 1 h17 l7 7 v23 h-24z" fill="#dfe5e3" stroke="#9aa4a0" stroke-width="1.2"/><path d="M23 1 v7 h7" fill="#dfe3e8" stroke="#9aa4a0" stroke-width="1"/><path d="M1 16 h13" stroke="#2ba0a8" stroke-width="3"/><path d="M12 10 l7 6 -7 6z" fill="#2ba0a8"/></svg>
<svg style="left:394px;top:62px;" width="32" height="34" viewBox="0 0 32 34"><path d="M6 1 h17 l7 7 v23 h-24z" fill="#dfe5e3" stroke="#9aa4a0" stroke-width="1.2"/><path d="M23 1 v7 h7" fill="#dfe3e8" stroke="#9aa4a0" stroke-width="1"/><path d="M6 16 h13" stroke="#3aa84c" stroke-width="3"/><path d="M9 10 l-7 6 7 6z" fill="#3aa84c"/></svg>
<svg style="left:452px;top:62px;" width="32" height="32" viewBox="0 0 32 32"><circle cx="16" cy="16" r="15" fill="#2fae44" stroke="#1f8a32" stroke-width="1"/><circle cx="16" cy="13" r="11" fill="#5ccc66" opacity=".6"/><path d="M12 8 L24 16 L12 24z" fill="#fff"/></svg>
<svg style="left:496px;top:62px;" width="32" height="32" viewBox="0 0 32 32"><circle cx="16" cy="16" r="15" fill="#9fd0ee" stroke="#8cc4e6" stroke-width="1"/><rect x="11" y="11" width="10" height="10" fill="#eef8ff"/></svg>
<svg style="left:540px;top:62px;" width="32" height="32" viewBox="0 0 32 32"><circle cx="16" cy="16" r="15" fill="#e32a2a" stroke="#c01818" stroke-width="1"/><circle cx="16" cy="16" r="7" fill="#fff"/><circle cx="16" cy="16" r="4" fill="#ea7070"/></svg>
<div class="a" style="left:581px;top:61px;width:13px;height:13px;background:#fff;border:1px solid #b9b9b9"></div>
<div class="a" style="left:581px;top:83px;width:13px;height:13px;background:#fff;border:1px solid #b9b9b9"></div>
<div class="a" style="left:581px;top:105px;width:13px;height:13px;background:#fff6d8;border:1px solid #e0c060"></div>
<svg style="left:582px;top:106px;" width="12" height="12" viewBox="0 0 12 12"><path d="M2 6 L5 10 L10 1" stroke="#111" stroke-width="1.6" fill="none"/></svg>
<div class="t" style="left:597px;top:61.5px;font-size:12px;letter-spacing:-.15px;color:#222">Visual Tracking</div>
<div class="t" style="left:597px;top:83.5px;font-size:12px;letter-spacing:-.15px;color:#222">Slow Motion</div>
<div class="t" style="left:597px;top:105.5px;font-size:12px;letter-spacing:-.15px;color:#222">Minimize</div>
<div class="a" style="left:689px;top:59px;width:80px;height:22px;background:#fff;border:1px solid #a9a9a9"></div>
<div class="t" style="left:695px;top:63.5px;font-size:12px;color:#9a9a9a;font-style:italic">Search</div>
<div class="a" style="left:8px;top:154px;width:270px;height:18px;background:linear-gradient(#4a5f82,#3a4e70);"></div>
<div class="t" style="left:9px;top:157.5px;color:#fff;font-size:12px;letter-spacing:-.15px">Toolbox</div>
<svg style="left:251px;top:160px;" width="10" height="6" viewBox="0 0 10 6"><path d="M0 0h9l-4.5 5z" fill="#fff"/></svg>
<svg style="left:266px;top:157px;" width="8" height="12" viewBox="0 0 8 12"><path d="M2 1h4v6h2v1H0V7h2z M3.5 8v4" stroke="#fff" fill="none" stroke-width="1"/></svg>
<div class="a" style="left:8px;top:172px;width:270px;height:836px;background:#fff"></div>
<div class="a" style="left:8px;top:172px;width:270px;height:19px;background:#fff;border-bottom:1px solid #d3dae4"></div>
<div class="t" style="left:13px;top:175.5px;color:#7a7a7a;font-size:12px;font-style:italic">Search</div>
<div class="a" style="left:260px;top:192px;width:17px;height:800px;background:#f0f0f0"></div>
<div class="a" style="left:260px;top:208px;width:17px;height:194px;background:#cdcdcd"></div>
<svg style="left:264px;top:197px;" width="9" height="6" viewBox="0 0 9 6"><path d="M0.5 5 L4.5 1 L8.5 5" stroke="#888" fill="none" stroke-width="1"/></svg>
<svg style="left:264px;top:980px;" width="9" height="6" viewBox="0 0 9 6"><path d="M0.5 1 L4.5 5 L8.5 1" stroke="#888" fill="none" stroke-width="1"/></svg>
<div class="a" style="left:8px;top:992px;width:252px;height:16px;background:#f0f0f0"></div>
<div class="a" style="left:26px;top:992px;width:214px;height:16px;background:#cdcdcd"></div>
<svg style="left:14px;top:996px;" width="6" height="9" viewBox="0 0 6 9"><path d="M5 0.5 L1 4.5 L5 8.5" stroke="#999" fill="none" stroke-width="1"/></svg>
<svg style="left:249px;top:996px;" width="6" height="9" viewBox="0 0 6 9"><path d="M1 0.5 L5 4.5 L1 8.5" stroke="#999" fill="none" stroke-width="1"/></svg>
<div class="a" style="left:260px;top:992px;width:18px;height:16px;background:#f0f0f0"></div>
<div class="a" style="left:30px;top:194px;width:202px;height:22px;background:#e6e9ed"></div>
<svg style="left:16px;top:201px;" width="8" height="8" viewBox="0 0 8 8"><path d="M7 0 V7 H0z" fill="#333"/></svg>
<div class="t" style="left:36px;top:198.5px;font-size:12px;letter-spacing:-.15px;color:#111">OpenRPA</div>
<div class="a" style="left:30px;top:787px;width:202px;height:22px;background:#e6e9ed"></div>
<svg style="left:16px;top:794px;" width="8" height="8" viewBox="0 0 8 8"><path d="M7 0 V7 H0z" fill="#333"/></svg>
<div class="t" style="left:36px;top:791.5px;font-size:12px;letter-spacing:-.15px;color:#111">OpenRPA.Database</div>
<div class="a" style="left:30px;top:905px;width:202px;height:22px;background:#e6e9ed"></div>
<svg style="left:16px;top:912px;" width="8" height="8" viewBox="0 0 8 8"><path d="M7 0 V7 H0z" fill="#333"/></svg>
<div class="t" style="left:36px;top:909.5px;font-size:12px;letter-spacing:-.15px;color:#111">OpenRPA.Forms</div>
<div class="a" style="left:30px;top:967px;width:202px;height:22px;background:#e6e9ed"></div>
<svg style="left:16px;top:974px;" width="8" height="8" viewBox="0 0 8 8"><path d="M7 0 V7 H0z" fill="#333"/></svg>
<div class="t" style="left:36px;top:971.5px;font-size:12px;letter-spacing:-.15px;color:#111">OpenRPA.IE</div>
<div class="a" style="left:47px;top:256px;width:211px;height:18px;background:#fde6a2"></div>
<svg style="left:50px;top:219px;" width="16" height="16" viewBox="0 0 16 16"><path d="M1.5 4 V14.5 H6" stroke="#666" fill="none" stroke-width="1"/><path d="M11 1.5 H14.5 V6" stroke="#999" fill="none" stroke-width="1"/><path d="M4 9 Q4 3.5 9.5 3.5" stroke="#111" stroke-width="2.2" fill="none"/><path d="M8 0 L12 3.5 L8 7z" fill="#111"/><circle cx="11.5" cy="12" r="3.2" fill="#fff" stroke="#111" stroke-width="2.6"/></svg>
<div class="t" style="left:71px;top:220.5px;font-size:12px;letter-spacing:-.15px;color:#1a1a1a">Add Workitem</div>
<svg style="left:50px;top:238px;" width="16" height="16" viewBox="0 0 16 16"><circle cx="8" cy="8" r="7" fill="none" stroke="#333" stroke-width="1.3"/><path d="M3 13 L13 3" stroke="#333" stroke-width="1.3"/></svg>
<div class="t" style="left:71px;top:239.5px;font-size:12px;letter-spacing:-.15px;color:#1a1a1a">Break</div>
<svg style="left:50px;top:257px;" width="16" height="16" viewBox="0 0 16 16"><rect x="2" y="3" width="12" height="10" fill="none" stroke="#9aa" stroke-width="1.2" stroke-dasharray="3 2"/></svg>
<div class="t" style="left:71px;top:258.5px;font-size:12px;letter-spacing:-.15px;color:#1a1a1a">Do While</div>
<svg style="left:50px;top:276px;" width="16" height="16" viewBox="0 0 16 16"><rect x="2" y="3" width="12" height="10" fill="none" stroke="#bbb" stroke-width="1.2" stroke-dasharray="3 2"/></svg>
<div class="t" style="left:71px;top:277.5px;font-size:12px;letter-spacing:-.15px;color:#1a1a1a">While</div>
<svg style="left:50px;top:295px;" width="16" height="16" viewBox="0 0 16 16"><path d="M1 9 h14 v6 h-14z" fill="#222"/><path d="M3 5 h3 v4 h-3z M9 5 h3 v4 h-3z M5 2 h3 v3 h-3z" fill="#333"/><path d="M2 12 h12" stroke="#fff" stroke-width="1"/></svg>
<div class="t" style="left:71px;top:296.5px;font-size:12px;letter-spacing:-.15px;color:#1a1a1a">Bulk Add Workitems</div>
<svg style="left:50px;top:314px;" width="16" height="16" viewBox="0 0 16 16"><path d="M5 1 L5 12 L8 9 L11 14 L12 13 L9 8 L13 8z" fill="#eee" stroke="#888" stroke-width="1"/></svg>
<div class="t" style="left:71px;top:315.5px;font-size:12px;letter-spacing:-.15px;color:#1a1a1a">Click Element</div>
<svg style="left:50px;top:333px;" width="16" height="16" viewBox="0 0 16 16"><rect x="1" y="1" width="13" height="13" fill="#fff" stroke="#2a70c0" stroke-width="1.4"/><rect x="1" y="1" width="13" height="3" fill="#2a70c0"/><path d="M9 9 L15 15 M15 9 L9 15" stroke="#e02020" stroke-width="2"/></svg>
<div class="t" style="left:71px;top:334.5px;font-size:12px;letter-spacing:-.15px;color:#1a1a1a">Close Application</div>
<svg style="left:50px;top:352px;" width="16" height="16" viewBox="0 0 16 16"><rect x="0" y="1" width="16" height="11" fill="#3a6ab0"/><path d="M3 4 v6 M6 4 v6 M12 4 v6" stroke="#a8c8f0" stroke-width="1"/><path d="M9 3 v10" stroke="#e02020" stroke-width="2"/><path d="M6 12 l3 4 3-4z" fill="#e02020"/></svg>
<div class="t" style="left:71px;top:353.5px;font-size:12px;letter-spacing:-.15px;color:#1a1a1a">Comment Out</div>
<svg style="left:50px;top:371px;" width="16" height="16" viewBox="0 0 16 16"><path d="M1 1 L8 8 L1 15 M7 1 L14 8 L7 15" stroke="#111" stroke-width="2" fill="none"/></svg>
<div class="t" style="left:71px;top:372.5px;font-size:12px;letter-spacing:-.15px;color:#1a1a1a">Continue</div>
<svg style="left:50px;top:389px;" width="16" height="16" viewBox="0 0 16 16"><rect x="2" y="1" width="10" height="12" fill="#e8eef6" stroke="#7a8aa0" stroke-width="1"/><rect x="5" y="4" width="10" height="12" fill="#f6f8fb" stroke="#7a8aa0" stroke-width="1"/><path d="M7 8h6 M7 10h6 M7 12h6" stroke="#8aa" stroke-width=".8"/></svg>
<div class="t" style="left:71px;top:390.5px;font-size:12px;letter-spacing:-.15px;color:#1a1a1a">Copy Clipboard</div>
<svg style="left:50px;top:408px;" width="16" height="16" viewBox="0 0 16 16"><path d="M1.5 4 V14.5 H6" stroke="#666" fill="none" stroke-width="1"/><path d="M11 1.5 H14.5 V6" stroke="#999" fill="none" stroke-width="1"/><path d="M4 9 Q4 3.5 9.5 3.5" stroke="#111" stroke-width="2.2" fill="none"/><path d="M8 0 L12 3.5 L8 7z" fill="#111"/><circle cx="11.5" cy="12" r="3.2" fill="#fff" stroke="#111" stroke-width="2.6"/></svg>
<div class="t" style="left:71px;top:409.5px;font-size:12px;letter-spacing:-.15px;color:#1a1a1a">Delete Workitem</div>
<svg style="left:50px;top:427px;" width="16" height="16" viewBox="0 0 16 16"><path d="M8 0 C9 4 14 6 14 11 A6 5 0 0 1 2 11 C2 8 4 7 5 4 C6 6 6 7 7 8 C8 6 8 3 8 0z" fill="#1a7ad8"/><path d="M8 9 C9 11 10 12 9.5 14 A2 2 0 0 1 6.5 14 C6 12 7 11 8 9z" fill="#fff"/></svg>
<div class="t" style="left:71px;top:428.5px;font-size:12px;letter-spacing:-.15px;color:#1a1a1a">Detector</div>
<svg style="left:50px;top:446px;" width="16" height="16" viewBox="0 0 16 16"><path d="M8 1 L15 8 L8 15 L1 8z" fill="none" stroke="#a8a8a8" stroke-width="1.2"/><circle cx="8" cy="8" r="4" fill="#fff" stroke="#a8a8a8" stroke-width="1.2"/><circle cx="8" cy="8" r="1.6" fill="#888"/></svg>
<div class="t" style="left:71px;top:447.5px;font-size:12px;letter-spacing:-.15px;color:#1a1a1a">Focus Element</div>
<svg style="left:50px;top:465px;" width="16" height="16" viewBox="0 0 16 16"><path d="M2 9 V12.5 H14 V9" stroke="#111" stroke-width="1.8" fill="none"/><path d="M5.5 11 C5.5 7 7.5 5 10.5 5" stroke="#111" stroke-width="1.8" fill="none"/><path d="M9.5 2 L13.5 5 L9.5 8z" fill="#111"/></svg>
<div class="t" style="left:71px;top:466.5px;font-size:12px;letter-spacing:-.15px;color:#1a1a1a">Foreach DataRow</div>
<svg style="left:50px;top:484px;" width="16" height="16" viewBox="0 0 16 16"><path d="M2 9 V12.5 H14 V9" stroke="#111" stroke-width="1.8" fill="none"/><path d="M5.5 11 C5.5 7 7.5 5 10.5 5" stroke="#111" stroke-width="1.8" fill="none"/><path d="M9.5 2 L13.5 5 L9.5 8z" fill="#111"/></svg>
<div class="t" style="left:71px;top:485.5px;font-size:12px;letter-spacing:-.15px;color:#1a1a1a">For Each&lt;&gt;</div>
<svg style="left:50px;top:503px;" width="16" height="16" viewBox="0 0 16 16"><rect x="1" y="1" width="13" height="14" fill="#fff" stroke="#666" stroke-width="1" stroke-dasharray="2 1"/><path d="M3 5h5 M3 8h5 M3 11h5" stroke="#555" stroke-width="1"/><circle cx="12" cy="8" r="2.5" fill="none" stroke="#333" stroke-width="1.2"/></svg>
<div class="t" style="left:71px;top:504.5px;font-size:12px;letter-spacing:-.15px;color:#1a1a1a">Get Workflow Instance</div>
<svg style="left:50px;top:522px;" width="16" height="16" viewBox="0 0 16 16"><rect x="0" y="0" width="16" height="16" fill="#f0a818"/><path d="M4 12 L8 2 L12 12 M5.5 8.5 h5" stroke="#fff" stroke-width="1.6" fill="none"/><rect x="0" y="13" width="16" height="3" fill="#7a8a9a"/></svg>
<div class="t" style="left:71px;top:523.5px;font-size:12px;letter-spacing:-.15px;color:#1a1a1a">Highlight Element</div>
<svg style="left:50px;top:541px;" width="16" height="16" viewBox="0 0 16 16"><rect x="1" y="2" width="14" height="14" rx="2" fill="#d8c8a8" stroke="#9a8a70" stroke-width="1"/><rect x="4" y="4" width="8" height="10" fill="#f4f4f4"/><rect x="5" y="0" width="6" height="3" fill="#888"/></svg>
<div class="t" style="left:71px;top:542.5px;font-size:12px;letter-spacing:-.15px;color:#1a1a1a">Insert Clipboard</div>
<svg style="left:50px;top:560px;" width="16" height="16" viewBox="0 0 16 16"><rect x="5" y="0" width="6" height="5" fill="#5a8ad8"/><path d="M8 5v3 M3 8h10 M3 8v2 M8 8v2 M13 8v2" stroke="#5a8ad8" stroke-width="1"/><rect x="0" y="10" width="5" height="5" fill="#2a8a8a"/><rect x="6" y="10" width="5" height="5" fill="#1a5ab0"/><rect x="11" y="10" width="5" height="5" fill="#2a8a8a"/></svg>
<div class="t" style="left:71px;top:561.5px;font-size:12px;letter-spacing:-.15px;color:#1a1a1a">Invoke OpenFlow</div>
<svg style="left:50px;top:579px;" width="16" height="16" viewBox="0 0 16 16"><rect x="0" y="4" width="5" height="8" fill="#fff" stroke="#e04040" stroke-width="1.4"/><rect x="9" y="0" width="6" height="5" fill="#e8c060"/><rect x="9" y="5" width="6" height="5" fill="#5a9ae0"/><rect x="9" y="10" width="6" height="6" fill="#60b060"/><path d="M5 8h4" stroke="#888"/></svg>
<div class="t" style="left:71px;top:580.5px;font-size:12px;letter-spacing:-.15px;color:#1a1a1a">Invoke OpenRPA</div>
<svg style="left:50px;top:598px;" width="16" height="16" viewBox="0 0 16 16"><rect x="0" y="4" width="5" height="8" fill="#fff" stroke="#e04040" stroke-width="1.4"/><rect x="9" y="0" width="6" height="5" fill="#e8c060"/><rect x="9" y="5" width="6" height="5" fill="#5a9ae0"/><rect x="9" y="10" width="6" height="6" fill="#60b060"/><path d="M5 8h4" stroke="#888"/></svg>
<div class="t" style="left:71px;top:599.5px;font-size:12px;letter-spacing:-.15px;color:#1a1a1a">Invoke Remote OpenRPA</div>
<svg style="left:50px;top:617px;" width="16" height="16" viewBox="0 0 16 16"><path d="M8 0 L11 4 H9 V7 H12 V5 L16 8 L12 11 V9 H9 V12 H11 L8 16 L5 12 H7 V9 H4 V11 L0 8 L4 5 V7 H7 V4 H5z" fill="#111"/></svg>
<div class="t" style="left:71px;top:618.5px;font-size:12px;letter-spacing:-.15px;color:#1a1a1a">Move Element</div>
<svg style="left:50px;top:636px;" width="16" height="16" viewBox="0 0 16 16"><path d="M1 1 L6 6" stroke="#333" stroke-width="1"/><ellipse cx="9" cy="10" rx="5" ry="6" transform="rotate(-35 9 10)" fill="#111"/></svg>
<div class="t" style="left:71px;top:637.5px;font-size:12px;letter-spacing:-.15px;color:#1a1a1a">Move Mouse</div>
<svg style="left:50px;top:655px;" width="16" height="16" viewBox="0 0 16 16"><rect x="1" y="1" width="13" height="13" fill="#fff" stroke="#2a70c0" stroke-width="1.4"/><rect x="1" y="1" width="13" height="3" fill="#2a70c0"/><circle cx="12" cy="12" r="4" fill="#2a9a4a"/><path d="M12 9.5v5 M9.5 12h5" stroke="#fff" stroke-width="1.3"/></svg>
<div class="t" style="left:71px;top:656.5px;font-size:12px;letter-spacing:-.15px;color:#1a1a1a">Open Application</div>
<svg style="left:50px;top:674px;" width="16" height="16" viewBox="0 0 16 16"><path d="M1.5 4 V14.5 H6" stroke="#666" fill="none" stroke-width="1"/><path d="M11 1.5 H14.5 V6" stroke="#999" fill="none" stroke-width="1"/><path d="M4 9 Q4 3.5 9.5 3.5" stroke="#111" stroke-width="2.2" fill="none"/><path d="M8 0 L12 3.5 L8 7z" fill="#111"/><circle cx="11.5" cy="12" r="3.2" fill="#fff" stroke="#111" stroke-width="2.6"/></svg>
<div class="t" style="left:71px;top:675.5px;font-size:12px;letter-spacing:-.15px;color:#1a1a1a">Pop Workitem</div>
<svg style="left:50px;top:693px;" width="16" height="16" viewBox="0 0 16 16"><rect x="1" y="1" width="14" height="12" rx="3" fill="#f5a050"/><path d="M4 12 l1 4 3-4z" fill="#f5a050"/><rect x="4" y="4" width="8" height="6" fill="#fcd0a0"/></svg>
<div class="t" style="left:71px;top:694.5px;font-size:12px;letter-spacing:-.15px;color:#1a1a1a">Show Balloon Tip</div>
<svg style="left:50px;top:712px;" width="16" height="16" viewBox="0 0 16 16"><path d="M4 4 L12 12 M12 4 L4 12" stroke="#9aa" stroke-width="1.2"/></svg>
<div class="t" style="left:71px;top:713.5px;font-size:12px;letter-spacing:-.15px;color:#1a1a1a">Stop OpenRPA</div>
<svg style="left:50px;top:731px;" width="16" height="16" viewBox="0 0 16 16"><path d="M8 1 L15.5 15 H0.5z" fill="#f8d030" stroke="#333" stroke-width="1.1"/><path d="M8 5.5v5" stroke="#111" stroke-width="1.8"/><circle cx="8" cy="12.8" r="1" fill="#111"/></svg>
<div class="t" style="left:71px;top:732.5px;font-size:12px;letter-spacing:-.15px;color:#1a1a1a">Throw Business Rule Exception</div>
<svg style="left:50px;top:750px;" width="16" height="16" viewBox="0 0 16 16"><path d="M1 15 L5 1 L9 15 M2.5 10 h5" stroke="#1a3a6a" stroke-width="1.4" fill="none"/><path d="M11 1v14 M9 1h4 M9 15h4" stroke="#1a3a6a" stroke-width="1.4"/></svg>
<div class="t" style="left:71px;top:751.5px;font-size:12px;letter-spacing:-.15px;color:#1a1a1a">Type Text</div>
<svg style="left:50px;top:769px;" width="16" height="16" viewBox="0 0 16 16"><path d="M1.5 4 V14.5 H6" stroke="#666" fill="none" stroke-width="1"/><path d="M11 1.5 H14.5 V6" stroke="#999" fill="none" stroke-width="1"/><path d="M4 9 Q4 3.5 9.5 3.5" stroke="#111" stroke-width="2.2" fill="none"/><path d="M8 0 L12 3.5 L8 7z" fill="#111"/><circle cx="11.5" cy="12" r="3.2" fill="#fff" stroke="#111" stroke-width="2.6"/></svg>
<div class="t" style="left:71px;top:770.5px;font-size:12px;letter-spacing:-.15px;color:#1a1a1a">Update Workitem</div>
<svg style="left:50px;top:812px;" width="16" height="16" viewBox="0 0 16 16"><ellipse cx="8" cy="3" rx="7" ry="2.5" fill="#111"/><path d="M1 3v10 q7 5 14 0 v-10" fill="#111"/><path d="M1 6.5 q7 3 14 0 M1 10 q7 3 14 0" stroke="#fff" stroke-width="1.2" fill="none"/></svg>
<div class="t" style="left:71px;top:813.5px;font-size:12px;letter-spacing:-.15px;color:#1a1a1a">Database Scope</div>
<svg style="left:50px;top:831px;" width="16" height="16" viewBox="0 0 16 16"><ellipse cx="8" cy="3" rx="7" ry="2.5" fill="#111"/><path d="M1 3v10 q7 5 14 0 v-10" fill="#111"/><path d="M1 6.5 q7 3 14 0 M1 10 q7 3 14 0" stroke="#fff" stroke-width="1.2" fill="none"/></svg>
<div class="t" style="left:71px;top:832.5px;font-size:12px;letter-spacing:-.15px;color:#1a1a1a">Execute Non Query</div>
<svg style="left:50px;top:850px;" width="16" height="16" viewBox="0 0 16 16"><ellipse cx="8" cy="3" rx="7" ry="2.5" fill="#111"/><path d="M1 3v10 q7 5 14 0 v-10" fill="#111"/><path d="M1 6.5 q7 3 14 0 M1 10 q7 3 14 0" stroke="#fff" stroke-width="1.2" fill="none"/></svg>
<div class="t" style="left:71px;top:851.5px;font-size:12px;letter-spacing:-.15px;color:#1a1a1a">Execute Query</div>
<svg style="left:50px;top:868px;" width="16" height="16" viewBox="0 0 16 16"><ellipse cx="8" cy="3" rx="7" ry="2.5" fill="#111"/><path d="M1 3v10 q7 5 14 0 v-10" fill="#111"/><path d="M1 6.5 q7 3 14 0 M1 10 q7 3 14 0" stroke="#fff" stroke-width="1.2" fill="none"/></svg>
<div class="t" style="left:71px;top:869.5px;font-size:12px;letter-spacing:-.15px;color:#1a1a1a">Execute Scalar&lt;&gt;</div>
<svg style="left:50px;top:887px;" width="16" height="16" viewBox="0 0 16 16"><ellipse cx="8" cy="3" rx="7" ry="2.5" fill="#111"/><path d="M1 3v10 q7 5 14 0 v-10" fill="#111"/><path d="M1 6.5 q7 3 14 0 M1 10 q7 3 14 0" stroke="#fff" stroke-width="1.2" fill="none"/></svg>
<div class="t" style="left:71px;top:888.5px;font-size:12px;letter-spacing:-.15px;color:#1a1a1a">Update From DataTable</div>
<svg style="left:50px;top:930px;" width="16" height="16" viewBox="0 0 16 16"><rect x="1" y="1" width="14" height="14" fill="#dbe6f2" stroke="#9ab" stroke-width="1"/><rect x="3" y="8" width="10" height="3" fill="#a8c0e0"/></svg>
<div class="t" style="left:71px;top:931.5px;font-size:12px;letter-spacing:-.15px;color:#1a1a1a">Invoke Formula</div>
<svg style="left:50px;top:949px;" width="16" height="16" viewBox="0 0 16 16"><rect x="0" y="1" width="16" height="14" fill="#3aa0a0"/><rect x="1" y="3" width="14" height="10" fill="#cfe8d0"/><path d="M2 8 h10" stroke="#1a9a2a" stroke-width="3"/><path d="M9 4 l5 4 -5 4z" fill="#1a9a2a"/></svg>
<div class="t" style="left:71px;top:950.5px;font-size:12px;letter-spacing:-.15px;color:#1a1a1a">Show Notification</div>
<div class="a" style="left:8px;top:1008px;width:56px;height:23px;background:#fff;border-radius:0 0 2px 2px"></div>
<div class="t" style="left:14px;top:1013.5px;font-size:12px;letter-spacing:-.15px;color:#222">Toolbox</div>
<div class="t" style="left:69px;top:1013.5px;font-size:12px;letter-spacing:-.15px;color:#fff">Snippets</div>
<div class="a" style="left:6px;top:1038px;width:46px;height:20px;background:#3c5277"></div>
<div class="a" style="left:54px;top:1038px;width:42px;height:20px;background:#3c5277"></div>
<div class="a" style="left:98px;top:1038px;width:107px;height:20px;background:#3c5277"></div>
<div class="t" style="left:7px;top:1042.5px;font-size:12px;letter-spacing:-.15px;color:#fff">Logging</div>
<div class="t" style="left:56px;top:1042.5px;font-size:12px;letter-spacing:-.15px;color:#fff">Output</div>
<div class="t" style="left:100px;top:1042.5px;font-size:12px;letter-spacing:-.15px;color:#fff">Workflow Instances</div>
<div class="a" style="left:4px;top:1059px;width:1556px;height:25px;background:#7a7a7a;border-radius:0 0 6px 6px"></div>
<div class="a" style="left:8px;top:1062px;width:612px;height:19px;background:#f1efef"></div>
<div class="t" style="left:16px;top:1066.5px;font-size:12px;letter-spacing:-.15px;color:#222">Disconnected from wss://localhost:8080/ reason Unable to connect to the remote server&nbsp;&nbsp;Closed</div>
<div class="t" style="left:545px;top:1066.5px;font-size:12px;letter-spacing:-.15px;color:#222">NM : online</div>
<div class="t" style="left:289px;top:156.5px;color:#fff;font-size:12px;letter-spacing:-.15px">Open project</div>
<div class="a" style="left:363px;top:155px;width:63px;height:18px;background:#fde9a8;border-radius:2px 2px 0 0"></div>
<div class="t" style="left:366px;top:157.5px;color:#222;font-size:12px;letter-spacing:-.15px">cmdTest</div>
<svg style="left:411px;top:158px;" width="10" height="10" viewBox="0 0 10 10"><path d="M1 1 L9 9 M9 1 L1 9" stroke="#333" stroke-width="1.2"/></svg>
<svg style="left:1239px;top:157px;" width="10" height="10" viewBox="0 0 10 10"><path d="M0 1 h9 M0 3 h9" stroke="#fff" stroke-width="1"/><path d="M0 5h9l-4.5 4z" fill="#fff"/></svg>
<div class="a" style="left:283px;top:172px;width:968px;height:3px;background:#fde9a8"></div>
<div class="a" style="left:283px;top:175px;width:968px;height:831px;background:#fff"></div>
<div class="t" style="left:289px;top:182.5px;font-size:12px;letter-spacing:-.15px;color:#222">cmdTest</div>
<div class="t" style="left:1119px;top:182.5px;font-size:12px;letter-spacing:-.15px;color:#222">Expand All</div>
<div class="t" style="left:1184px;top:182.5px;font-size:12px;letter-spacing:-.15px;color:#222">Collapse All</div>
<div class="a" style="left:285px;top:202px;width:964px;height:1px;background:#dfe3e8"></div>
<div class="a" style="left:283px;top:1006px;width:354px;height:22px;background:linear-gradient(#465b80,#3a4f72)"></div>
<div class="a" style="left:283px;top:1028px;width:354px;height:3px;background:#f7dc9c"></div>
<div class="t" style="left:288px;top:1010.5px;color:#fff;font-size:12px;letter-spacing:-.15px">Variables</div>
<div class="t" style="left:352px;top:1010.5px;color:#fff;font-size:12px;letter-spacing:-.15px">Arguments</div>
<div class="t" style="left:428px;top:1010.5px;color:#fff;font-size:12px;letter-spacing:-.15px">Imports</div>
<div class="a" style="left:639px;top:406px;width:256px;height:392px;background:#fff;border:1px solid #d3d8de;border-radius:2px"></div>
<div class="a" style="left:640px;top:407px;width:254px;height:21px;background:#e6e9ee;border-bottom:1px solid #d8dce2"></div>
<svg style="left:643px;top:409px;" width="15" height="16" viewBox="0 0 15 16"><rect x="0.5" y="0.5" width="14" height="15" fill="#8fb8e0" stroke="#6a8aaa"/><rect x="3" y="3" width="9" height="10" fill="#cfe4f6"/><path d="M7.5 4v8 M5 6l2.5-2 2.5 2 M5 10l2.5 2 2.5-2" stroke="#3a6aa0" stroke-width="1" fill="none"/></svg>
<div class="t" style="left:665px;top:409.5px;font-size:12px;letter-spacing:-.15px;color:#222">Sequence</div>
<svg style="left:759px;top:453px;" width="16" height="12" viewBox="0 0 16 12"><path d="M1 1 H15 L8 10z" fill="#fff" stroke="#9aa2ac" stroke-width="1.2"/></svg>
<svg style="left:759px;top:563px;" width="16" height="12" viewBox="0 0 16 12"><path d="M1 1 H15 L8 10z" fill="#fff" stroke="#9aa2ac" stroke-width="1.2"/></svg>
<svg style="left:759px;top:625px;" width="16" height="12" viewBox="0 0 16 12"><path d="M1 1 H15 L8 10z" fill="#fff" stroke="#9aa2ac" stroke-width="1.2"/></svg>
<svg style="left:759px;top:761px;" width="16" height="12" viewBox="0 0 16 12"><path d="M1 1 H15 L8 10z" fill="#fff" stroke="#9aa2ac" stroke-width="1.2"/></svg>
<div class="a" style="left:647px;top:476px;width:240px;height:76px;border:3px solid #ffef00;border-radius:5px;background:#ffef00"></div>
<div class="a" style="left:650px;top:479px;width:234px;height:70px;background:#fff;border:1px solid #d7cfa0"></div>
<div class="a" style="left:651px;top:480px;width:232px;height:21px;background:#fde6a6;border-bottom:1px solid #e4d49a"></div>
<svg style="left:653px;top:481px;" width="17" height="19" viewBox="0 0 17 19"><path d="M4 1 h8 v9 M4 1 l-3 3 v5" stroke="#333" stroke-width="1" fill="none"/><rect x="1" y="10" width="15" height="4" fill="#111"/><path d="M3 15 v3 M14 15 v3" stroke="#333" stroke-width="1"/></svg>
<svg style="left:635px;top:484px;" width="14" height="8" viewBox="0 0 14 8"><path d="M0 1 h9 l4 3 -4 3 h-9z" fill="#333"/></svg>
<div class="t" style="left:676px;top:482.5px;font-size:12px;letter-spacing:-.15px;color:#222">ReadJSON</div>
<svg style="left:867px;top:484px;" width="12" height="12" viewBox="0 0 12 12"><path d="M1 6 L6 1 L11 6 M1 11 L6 6 L11 11" stroke="#333" stroke-width="1.3" fill="none"/></svg>
<div class="a" style="left:662px;top:513px;width:180px;height:24px;background:#fff;border:1px solid #c9ced6"></div>
<div class="t" style="left:668px;top:518.5px;width:172px;overflow:hidden;font-size:12px;letter-spacing:-.15px;color:#222">"F:¥System¥Desk¥batTest¥test.json"</div>
<div class="a" style="left:847px;top:509px;width:30px;height:33px;background:#dddddd;border:1px solid #7a7a7a"></div>
<div class="t" style="left:857px;top:522.5px;font-size:12px;color:#222">...</div>
<div class="a" style="left:667px;top:589px;width:200px;height:21px;background:#e6e9ee;border:1px solid #dadee4;border-radius:2px"></div>
<svg style="left:669px;top:591px;" width="16" height="16" viewBox="0 0 16 16"><circle cx="8" cy="8" r="7" fill="#cfdcf2" stroke="#5a78b8" stroke-width="1.3"/><path d="M8 3v5h3" stroke="#2a4a90" stroke-width="1.2" fill="none"/></svg>
<div class="t" style="left:693px;top:592.5px;font-size:12px;letter-spacing:-.15px;color:#222">Delay</div>
<div class="a" style="left:665px;top:651px;width:203px;height:95px;background:#fff;border:1px solid #d3d8de;border-radius:2px"></div>
<div class="a" style="left:666px;top:652px;width:201px;height:21px;background:#e6e9ee;border-bottom:1px solid #d8dce2"></div>
<svg style="left:668px;top:654px;" width="16" height="16" viewBox="0 0 16 16"><circle cx="8" cy="8" r="7.5" fill="#111"/><path d="M6 4.5 L11.5 8 L6 11.5z" fill="#fff"/></svg>
<div class="t" style="left:691px;top:654.5px;font-size:12px;letter-spacing:-.15px;color:#222">StartProcess</div>
<svg style="left:853px;top:657px;" width="12" height="12" viewBox="0 0 12 12"><path d="M1 6 L6 1 L11 6 M1 11 L6 6 L11 11" stroke="#333" stroke-width="1.3" fill="none"/></svg>
<div class="a" style="left:677px;top:681px;width:150px;height:24px;background:#fff;border:1px solid #c9ced6"></div>
<div class="t" style="left:683px;top:686.5px;width:142px;overflow:hidden;font-size:12px;letter-spacing:-.15px;color:#222">"F:¥System¥Desk¥batTest¥cmd.bat"</div>
<div class="a" style="left:831px;top:684px;width:32px;height:18px;background:#dddddd;border:1px solid #7a7a7a"></div>
<div class="t" style="left:841px;top:687.5px;font-size:12px;color:#222">...</div>
<div class="a" style="left:677px;top:711px;width:180px;height:24px;background:#fff;border:1px solid #c9ced6"></div>
<div class="t" style="left:683px;top:716.5px;font-size:12px;color:#222">"test"</div>
<div class="a" style="left:1255px;top:154px;width:301px;height:18px;background:linear-gradient(#4a5f82,#3a4e70)"></div>
<div class="t" style="left:1258px;top:157.5px;color:#fff;font-size:12px;letter-spacing:-.15px">Properties</div>
<svg style="left:1529px;top:160px;" width="10" height="6" viewBox="0 0 10 6"><path d="M0 0h9l-4.5 5z" fill="#fff"/></svg>
<svg style="left:1544px;top:157px;" width="8" height="12" viewBox="0 0 8 12"><path d="M2 1h4v6h2v1H0V7h2z M3.5 8v4" stroke="#fff" fill="none" stroke-width="1"/></svg>
<div class="a" style="left:1256px;top:172px;width:299px;height:860px;background:#fff"></div>
<div class="a" style="left:1256px;top:172px;width:299px;height:76px;background:#f0f0f0"></div>
<div class="t" style="left:1259px;top:179.5px;font-size:12px;letter-spacing:-.15px;color:#222">OpenRPA.Utilities.ReadJSON</div>
<div class="a" style="left:1259px;top:203px;width:22px;height:22px;background:#dce8f6;border:1px solid #3a3a3a"></div>
<svg style="left:1262px;top:206px;" width="16" height="16" viewBox="0 0 16 16"><rect x="1" y="1" width="5" height="5" fill="#fff" stroke="#555" stroke-width=".8"/><rect x="1" y="9" width="5" height="5" fill="#fff" stroke="#555" stroke-width=".8"/><path d="M8 3h7 M8 5h7 M8 11h7 M8 13h7" stroke="#555" stroke-width="1"/></svg>
<svg style="left:1283px;top:204px;" width="18" height="20" viewBox="0 0 18 20"><text x="0" y="9" font-size="9" fill="#2a5ab0" font-family="Liberation Sans">A</text><text x="0" y="19" font-size="9" fill="#c03030" font-family="Liberation Sans">Z</text><path d="M13 1v16 M10 14l3 4 3-4" stroke="#111" stroke-width="1.3" fill="none"/></svg>
<div class="a" style="left:1305px;top:205px;width:1px;height:20px;background:#c8c8c8"></div>
<div class="t" style="left:1312px;top:207.5px;font-size:12px;letter-spacing:-.15px;color:#222">Search:</div>
<div class="a" style="left:1354px;top:204px;width:140px;height:19px;background:#fff;border:1px solid #7a7a7a"></div>
<div class="a" style="left:1494px;top:203px;width:57px;height:21px;background:#efefef;border:1px solid #9a9a9a"></div>
<div class="t" style="left:1509px;top:207.5px;font-size:12px;letter-spacing:-.15px;color:#222">Clear</div>
<div class="a" style="left:1257px;top:228px;width:297px;height:21px;background:#f0f0f0;border:1px dotted #888"></div>
<div class="a" style="left:1260px;top:232px;width:11px;height:11px;border:1px solid #333;background:#fff"></div>
<div class="a" style="left:1262px;top:237px;width:7px;height:1px;background:#333"></div>
<div class="t" style="left:1274px;top:231.5px;font-size:12px;letter-spacing:-.15px;color:#111;font-size:12.5px">Misc</div>
<div class="a" style="left:1257px;top:249px;width:14px;height:70px;background:#f0f0f0"></div>
<div class="a" style="left:1271px;top:271px;width:284px;height:1px;background:#ececec"></div>
<div class="t" style="left:1276px;top:253.5px;font-size:12px;letter-spacing:-.15px;color:#222">DataTable</div>
<div class="a" style="left:1271px;top:294px;width:284px;height:1px;background:#ececec"></div>
<div class="t" style="left:1276px;top:276.5px;font-size:12px;letter-spacing:-.15px;color:#222">DisplayName</div>
<div class="a" style="left:1271px;top:317px;width:284px;height:1px;background:#ececec"></div>
<div class="t" style="left:1276px;top:299.5px;font-size:12px;letter-spacing:-.15px;color:#222">Filename</div>
<div class="a" style="left:1439px;top:249px;width:1px;height:70px;background:#ececec"></div>
<div class="a" style="left:1441px;top:250px;width:92px;height:21px;background:#fff;border:1px solid #d6d6d6"></div>
<div class="t" style="left:1447px;top:253.5px;font-size:12px;letter-spacing:-.15px;color:#222">dt</div>
<div class="a" style="left:1534px;top:251px;width:19px;height:20px;background:#f4f4f4;border:1px solid #8a8a8a"></div>
<div class="t" style="left:1539px;top:256.5px;font-size:11px;color:#222">...</div>
<div class="t" style="left:1444px;top:276.5px;font-size:12px;letter-spacing:-.15px;color:#222">ReadJSON</div>
<div class="a" style="left:1441px;top:296px;width:92px;height:21px;background:#fff;border:1px solid #d6d6d6"></div>
<div class="t" style="left:1447px;top:299px;width:82px;overflow:hidden;font-size:12px;color:#222">"F:¥System¥Desk¥batTest</div>
<div class="a" style="left:1534px;top:297px;width:19px;height:20px;background:#f4f4f4;border:1px solid #8a8a8a"></div>
<div class="t" style="left:1539px;top:302.5px;font-size:11px;color:#222">...</div>
<div class="a" style="left:636px;top:800px;width:901px;height:451px;background:#fff;border:1px solid #bcbcbc;border-radius:8px 8px 0 0;box-shadow:0 0 5px rgba(0,0,0,.12)"></div>
<div class="a" style="left:638px;top:801px;width:898px;height:30px;background:linear-gradient(90deg,#f8eeef,#f5eef2 60%,#f2eff6);border-radius:8px 8px 0 0"></div>
<div class="a" style="left:638px;top:850px;width:898px;height:1px;background:#ebebeb"></div>
<div class="a" style="left:638px;top:874px;width:898px;height:1px;background:#e2e2e2"></div>
<svg style="left:644px;top:806px;" width="18" height="18" viewBox="0 0 18 18"><rect x="1" y="3" width="13" height="14" fill="#fff" stroke="#555" stroke-width="1"/><path d="M3 7h8 M3 10h8 M3 13h8" stroke="#9ac" stroke-width="1"/><path d="M7 13 L16 2 L18 4 L9 15z" fill="#8ac030" stroke="#4a7a10" stroke-width=".8"/></svg>
<div class="t" style="left:666px;top:808.5px;font-size:12px;letter-spacing:-.15px;color:#222">F:\System\Desk\batTest\test.json - Notepad++</div>
<div class="a" style="left:1418px;top:815px;width:11px;height:1px;background:#222"></div>
<div class="a" style="left:1463px;top:810px;width:10px;height:10px;border:1.3px solid #222"></div>
<svg style="left:1509px;top:810px;" width="11" height="11" viewBox="0 0 11 11"><path d="M0.5 0.5 L10.5 10.5 M10.5 0.5 L0.5 10.5" stroke="#222" stroke-width="1.2"/></svg>
<div class="t" style="left:644px;top:834.5px;font-size:12px;letter-spacing:-.15px;color:#222">文件(F)</div>
<div class="t" style="left:695px;top:834.5px;font-size:12px;letter-spacing:-.15px;color:#222">编辑(E)</div>
<div class="t" style="left:748px;top:834.5px;font-size:12px;letter-spacing:-.15px;color:#222">搜索(S)</div>
<div class="t" style="left:799px;top:834.5px;font-size:12px;letter-spacing:-.15px;color:#222">视图(V)</div>
<div class="t" style="left:852px;top:834.5px;font-size:12px;letter-spacing:-.15px;color:#222">编码(N)</div>
<div class="t" style="left:907px;top:834.5px;font-size:12px;letter-spacing:-.15px;color:#222">语言(L)</div>
<div class="t" style="left:960px;top:834.5px;font-size:12px;letter-spacing:-.15px;color:#222">设置(T)</div>
<div class="t" style="left:1012px;top:834.5px;font-size:12px;letter-spacing:-.15px;color:#222">工具(O)</div>
<div class="t" style="left:1067px;top:834.5px;font-size:12px;letter-spacing:-.15px;color:#222">宏(M)</div>
<div class="t" style="left:1112px;top:834.5px;font-size:12px;letter-spacing:-.15px;color:#222">运行(R)</div>
<div class="t" style="left:1165px;top:834.5px;font-size:12px;letter-spacing:-.15px;color:#222">插件(P)</div>
<div class="t" style="left:1218px;top:834.5px;font-size:12px;letter-spacing:-.15px;color:#222">窗口(W)</div>
<div class="t" style="left:1274px;top:834.5px;font-size:12px;letter-spacing:-.15px;color:#222">?</div>
<div class="t" style="left:1522px;top:834.5px;font-size:12px;letter-spacing:-.15px;color:#222">X</div>
<svg style="left:643px;top:854px;" width="16" height="16" viewBox="0 0 16 16"><path d="M2.5 0.5 h8 l3 3 v12 h-11z" fill="#fff" stroke="#b8b8b8"/><circle cx="12" cy="12.5" r="3.5" fill="#3aa040"/><path d="M12 10.5v4 M10 12.5h4" stroke="#fff" stroke-width="1.2"/></svg>
<svg style="left:665px;top:854px;" width="16" height="16" viewBox="0 0 16 16"><rect x="6" y="0.5" width="9" height="10" fill="#cfe0f4" stroke="#6a9ad0"/><path d="M0.5 6.5 h5 l1 1.5 h8 v7.5 h-14z" fill="#f6d070" stroke="#c8a040"/></svg>
<svg style="left:688px;top:854px;" width="16" height="16" viewBox="0 0 16 16"><rect x="0.5" y="0.5" width="15" height="15" fill="#7a7a7a" stroke="#5a5a5a"/><rect x="3" y="1" width="9" height="5" fill="#e8e8e8"/><rect x="3" y="10" width="10" height="5" fill="#dcdcdc"/></svg>
<svg style="left:711px;top:854px;" width="16" height="16" viewBox="0 0 16 16"><rect x="0.5" y="0.5" width="10" height="10" fill="#8a8a8a"/><rect x="3.5" y="3.5" width="10" height="10" fill="#7a7a7a" stroke="#fff" stroke-width=".6"/><rect x="5.5" y="5.5" width="10" height="10" fill="#6a6a6a" stroke="#fff" stroke-width=".6"/><rect x="8" y="6" width="5" height="3" fill="#ddd"/></svg>
<svg style="left:735px;top:854px;" width="16" height="16" viewBox="0 0 16 16"><path d="M2.5 0.5 h8 l3 3 v12 h-11z" fill="#fff" stroke="#b8b8b8"/><path d="M4.5 5h6 M4.5 7.5h6 M4.5 10h4" stroke="#9a9a9a"/><circle cx="11.5" cy="12.5" r="3.5" fill="#e86a20"/><path d="M9.5 12.5h4" stroke="#fff" stroke-width="1.2"/></svg>
<svg style="left:757px;top:854px;" width="16" height="16" viewBox="0 0 16 16"><path d="M0.5 0.5h7l2 2v9h-9z" fill="#fff" stroke="#c0c0c0"/><path d="M3.5 2.5h7l2 2v10h-9z" fill="#fff" stroke="#b0b0b0"/><circle cx="12" cy="12.5" r="3.5" fill="#e86a20"/><path d="M10 12.5h4" stroke="#fff" stroke-width="1.2"/></svg>
<svg style="left:780px;top:854px;" width="16" height="16" viewBox="0 0 16 16"><rect x="4" y="0.5" width="8" height="6" fill="#cfe0f4" stroke="#6a9ad0"/><rect x="0.5" y="6" width="15" height="7" rx="1.5" fill="#8a96a8" stroke="#4a5668"/><rect x="3" y="11" width="10" height="4" fill="#fff" stroke="#888"/></svg>
<svg style="left:811px;top:854px;" width="16" height="16" viewBox="0 0 16 16"><path d="M12 1 L6 11 M5 1 L10 11" stroke="#666" stroke-width="1.4"/><circle cx="5" cy="13" r="2.2" fill="none" stroke="#666" stroke-width="1.3"/><circle cx="11" cy="13" r="2.2" fill="none" stroke="#666" stroke-width="1.3"/></svg>
<svg style="left:834px;top:854px;" width="16" height="16" viewBox="0 0 16 16"><path d="M0.5 0.5h7l2 2v8h-9z" fill="#e8e8e8" stroke="#8a8a8a"/><path d="M5.5 4.5h7l3 3v8h-10z" fill="#f4f4f4" stroke="#7a7a7a"/><path d="M7.5 9h5 M7.5 11.5h5" stroke="#aaa"/></svg>
<svg style="left:857px;top:854px;" width="16" height="16" viewBox="0 0 16 16"><rect x="0.5" y="1.5" width="11" height="13" fill="#9a9a9a" stroke="#7a7a7a"/><rect x="3" y="0" width="6" height="3" fill="#6a6a6a"/><path d="M6.5 5.5h6l3 3v7h-9z" fill="#e8e8e8" stroke="#7a7a7a"/></svg>
<svg style="left:888px;top:854px;" width="16" height="16" viewBox="0 0 16 16"><path d="M4 5 h6 a4 4 0 0 1 0 8 h-5" stroke="#3aa040" stroke-width="2.6" fill="none"/><path d="M0.5 5 l5-4 v8z" fill="#3aa040"/></svg>
<svg style="left:911px;top:854px;" width="16" height="16" viewBox="0 0 16 16"><path d="M12 5 h-6 a4 4 0 0 0 0 8 h5" stroke="#8a8a8a" stroke-width="2.6" fill="none"/><path d="M15.5 5 l-5-4 v8z" fill="#8a8a8a"/></svg>
<svg style="left:942px;top:854px;" width="16" height="16" viewBox="0 0 16 16"><rect x="1" y="5" width="6" height="9" rx="1" fill="#2a2e34"/><rect x="9" y="5" width="6" height="9" rx="1" fill="#2a2e34"/><rect x="2.5" y="2" width="3" height="4" fill="#3a3e44"/><rect x="10.5" y="2" width="3" height="4" fill="#3a3e44"/><rect x="6" y="7" width="4" height="3" fill="#2a2e34"/></svg>
<svg style="left:965px;top:854px;" width="16" height="16" viewBox="0 0 16 16"><text x="0" y="8" font-size="9" font-weight="bold" font-style="italic" fill="#2a6ad0" font-family="Liberation Sans">b</text><text x="6" y="16" font-size="11" font-weight="bold" font-style="italic" fill="#3a8ae0" font-family="Liberation Sans">a</text></svg>
<svg style="left:996px;top:854px;" width="16" height="16" viewBox="0 0 16 16"><circle cx="6" cy="6" r="5" fill="#dce8f6" stroke="#8ab0d8" stroke-width="1.2"/><path d="M9 9 L14 14" stroke="#a07a40" stroke-width="2"/><path d="M9 3v6 M6 6h6" stroke="#2a9a3a" stroke-width="2"/></svg>
<svg style="left:1019px;top:854px;" width="16" height="16" viewBox="0 0 16 16"><circle cx="6" cy="6" r="5" fill="#dce8f6" stroke="#8ab0d8" stroke-width="1.2"/><path d="M9 9 L14 14" stroke="#a07a40" stroke-width="2"/><path d="M6 6h7" stroke="#e03a3a" stroke-width="2"/></svg>
<svg style="left:1050px;top:854px;" width="16" height="16" viewBox="0 0 16 16"><rect x="0.5" y="0.5" width="13" height="12" fill="#fff" stroke="#5a8ad0"/><rect x="0.5" y="0.5" width="13" height="3" fill="#cfe0f4" stroke="#5a8ad0"/><path d="M7 0.5v12" stroke="#5a8ad0"/><rect x="8" y="9" width="8" height="7" fill="#f0c050" stroke="#c89a30"/></svg>
<svg style="left:1073px;top:854px;" width="16" height="16" viewBox="0 0 16 16"><rect x="0.5" y="0.5" width="13" height="12" fill="#fff" stroke="#5a8ad0"/><rect x="0.5" y="0.5" width="13" height="3" fill="#cfe0f4" stroke="#5a8ad0"/><path d="M0.5 6.5h13" stroke="#5a8ad0"/><rect x="8" y="9" width="8" height="7" fill="#f0c050" stroke="#c89a30"/></svg>
<svg style="left:1103px;top:854px;" width="16" height="16" viewBox="0 0 16 16"><path d="M1 2h9 M1 6h13 M1 10h8 M1 14h8" stroke="#3a4a6a" stroke-width="1.4"/><path d="M14 6v6h-4" stroke="#3a70c0" stroke-width="1.3" fill="none"/><path d="M10 10l-2 2 2 2z" fill="#3a70c0"/></svg>
<svg style="left:1126px;top:854px;" width="16" height="16" viewBox="0 0 16 16"><text x="3" y="14" font-size="15" fill="#3a70d0" font-family="Liberation Sans">¶</text></svg>
<svg style="left:1148px;top:852px;" width="22" height="21" viewBox="0 0 22 21"><rect x="0.5" y="0.5" width="21" height="20" fill="#cce0f8" stroke="#99c0e8"/><path d="M6 4h10 M8 7h8 M8 10h8 M8 13h8 M6 16h10" stroke="#1a3ad0" stroke-width="1.6"/><path d="M4 3v15" stroke="#1a3ad0" stroke-dasharray="1 1"/></svg>
<svg style="left:1173px;top:854px;" width="16" height="16" viewBox="0 0 16 16"><rect x="0.5" y="1.5" width="15" height="13" fill="#fff" stroke="#8a8a8a"/><rect x="1" y="2" width="14" height="3" fill="#cfe0f4"/><path d="M4 9 l4 4 4-4z M6 6h4v4h-4z" fill="#f0b030"/></svg>
<svg style="left:1196px;top:854px;" width="16" height="16" viewBox="0 0 16 16"><rect x="0.5" y="0.5" width="15" height="15" fill="#e8d890" stroke="#6a6a6a"/><path d="M3 3 L12 12" stroke="#e0a030" stroke-width="2"/><path d="M2 14 L6 10" stroke="#4a9a4a" stroke-width="2"/></svg>
<svg style="left:1219px;top:854px;" width="16" height="16" viewBox="0 0 16 16"><path d="M3.5 0.5h7l4 4v11h-11z" fill="#fff" stroke="#aaa"/><path d="M3 15 q3-2 4-10 q1-3 4-3" stroke="#d02020" stroke-width="2" fill="none"/><path d="M4 8h5" stroke="#d02020" stroke-width="1.5"/></svg>
<svg style="left:1242px;top:854px;" width="16" height="16" viewBox="0 0 16 16"><path d="M0.5 3.5h6l1 2h8v9h-15z" fill="#f4c8c8" stroke="#d89898"/><path d="M0.5 6.5h15" stroke="#e0a8a8"/></svg>
<svg style="left:1265px;top:854px;" width="16" height="16" viewBox="0 0 16 16"><ellipse cx="8" cy="8" rx="7.5" ry="5" fill="#e4e8ee" stroke="#a0a8b8"/><circle cx="8" cy="8" r="3" fill="#5a8ac0"/><circle cx="8" cy="8" r="1.2" fill="#1a2a4a"/></svg>
<svg style="left:1295px;top:854px;" width="16" height="16" viewBox="0 0 16 16"><rect x="0.5" y="0.5" width="15" height="15" fill="#fff" stroke="#aaa"/><circle cx="8" cy="8" r="4" fill="#d00000"/></svg>
<svg style="left:1318px;top:854px;" width="16" height="16" viewBox="0 0 16 16"><rect x="0.5" y="0.5" width="15" height="15" fill="#fff" stroke="#aaa"/><rect x="4" y="4" width="8" height="8" fill="#9a9a9a"/></svg>
<svg style="left:1341px;top:854px;" width="16" height="16" viewBox="0 0 16 16"><rect x="0.5" y="0.5" width="15" height="15" fill="#fff" stroke="#aaa"/><path d="M5 3l7 5-7 5z" fill="#8a8a8a"/></svg>
<svg style="left:1364px;top:854px;" width="16" height="16" viewBox="0 0 16 16"><rect x="0.5" y="0.5" width="15" height="15" fill="#fff" stroke="#aaa"/><path d="M2 3l6 5-6 5z M8 3l6 5-6 5z" fill="#3a70d0"/></svg>
<svg style="left:1388px;top:854px;" width="16" height="16" viewBox="0 0 16 16"><rect x="0.5" y="0.5" width="12" height="11" fill="#aaa" stroke="#888"/><rect x="4.5" y="5.5" width="11" height="10" fill="#ccc" stroke="#888"/><path d="M6 9h8 M6 12h8" stroke="#888"/></svg>
<div class="a" style="left:802px;top:855px;width:1px;height:16px;background:#a8a8a8"></div>
<div class="a" style="left:879px;top:855px;width:1px;height:16px;background:#a8a8a8"></div>
<div class="a" style="left:933px;top:855px;width:1px;height:16px;background:#a8a8a8"></div>
<div class="a" style="left:987px;top:855px;width:1px;height:16px;background:#a8a8a8"></div>
<div class="a" style="left:1041px;top:855px;width:1px;height:16px;background:#a8a8a8"></div>
<div class="a" style="left:1095px;top:855px;width:1px;height:16px;background:#a8a8a8"></div>
<div class="a" style="left:1288px;top:855px;width:1px;height:16px;background:#a8a8a8"></div>
<div class="a" style="left:638px;top:875px;width:898px;height:27px;background:#f0f0f0"></div>
<div class="a" style="left:640px;top:880px;width:108px;height:22px;background:#d0d0d0;border:1px solid #c4c4c4;border-bottom:none"></div>
<svg style="left:644px;top:883px;" width="14" height="14" viewBox="0 0 14 14"><rect x="0" y="0" width="13" height="13" fill="#3a86d8"/><rect x="3" y="1" width="7" height="4" fill="#8ab8e8"/><rect x="3" y="8" width="7" height="4" fill="#6aa0d8"/></svg>
<div class="t" style="left:660px;top:884.5px;font-size:11.5px;letter-spacing:-.4px;color:#9a9a9a">summary.json</div>
<svg style="left:733px;top:884px;" width="11" height="11" viewBox="0 0 11 11"><rect x="0" y="0" width="11" height="11" fill="#bdbdbd"/><path d="M2.5 2.5l6 6 M8.5 2.5l-6 6" stroke="#fff" stroke-width="1.8"/></svg>
<div class="a" style="left:750px;top:880px;width:71px;height:22px;background:#d0d0d0;border:1px solid #c4c4c4;border-bottom:none"></div>
<svg style="left:754px;top:883px;" width="14" height="14" viewBox="0 0 14 14"><rect x="0" y="0" width="13" height="13" fill="#3a86d8"/><rect x="3" y="1" width="7" height="4" fill="#8ab8e8"/><rect x="3" y="8" width="7" height="4" fill="#6aa0d8"/></svg>
<div class="t" style="left:770px;top:884.5px;font-size:11.5px;letter-spacing:-.4px;color:#9a9a9a">test.py</div>
<svg style="left:806px;top:884px;" width="11" height="11" viewBox="0 0 11 11"><rect x="0" y="0" width="11" height="11" fill="#bdbdbd"/><path d="M2.5 2.5l6 6 M8.5 2.5l-6 6" stroke="#fff" stroke-width="1.8"/></svg>
<div class="a" style="left:823px;top:880px;width:79px;height:22px;background:#d0d0d0;border:1px solid #c4c4c4;border-bottom:none"></div>
<svg style="left:827px;top:883px;" width="14" height="14" viewBox="0 0 14 14"><rect x="0" y="0" width="13" height="13" fill="#3a86d8"/><rect x="3" y="1" width="7" height="4" fill="#8ab8e8"/><rect x="3" y="8" width="7" height="4" fill="#6aa0d8"/></svg>
<div class="t" style="left:843px;top:884.5px;font-size:11.5px;letter-spacing:-.4px;color:#9a9a9a">info.json</div>
<svg style="left:887px;top:884px;" width="11" height="11" viewBox="0 0 11 11"><rect x="0" y="0" width="11" height="11" fill="#bdbdbd"/><path d="M2.5 2.5l6 6 M8.5 2.5l-6 6" stroke="#fff" stroke-width="1.8"/></svg>
<div class="a" style="left:904px;top:878px;width:83px;height:24px;background:#fff;border:1px solid #c8c8c8;border-bottom:none"></div>
<div class="a" style="left:904px;top:877px;width:83px;height:3px;background:#f5a040"></div>
<svg style="left:908px;top:883px;" width="14" height="14" viewBox="0 0 14 14"><rect x="0.5" y="0.5" width="12" height="12" fill="#e8f0f8" stroke="#3a80d0"/><rect x="3" y="1" width="7" height="4" fill="#8ab8e8"/><rect x="3" y="8" width="7" height="4" fill="#a8d8a0"/></svg>
<div class="t" style="left:924px;top:884.5px;font-size:11.5px;letter-spacing:-.4px;color:#222">test.json</div>
<svg style="left:972px;top:884px;" width="11" height="11" viewBox="0 0 11 11"><rect x="0" y="0" width="11" height="11" fill="#c05070"/><path d="M2.5 2.5l6 6 M8.5 2.5l-6 6" stroke="#fff" stroke-width="1.8"/></svg>
<div class="a" style="left:639px;top:902px;width:897px;height:2px;background:#6a6a6a"></div>
<div class="a" style="left:638px;top:904px;width:898px;height:347px;background:#fff"></div>
<div class="a" style="left:641px;top:904px;width:45px;height:347px;background:#e4e4e4"></div>
<div class="a" style="left:639px;top:902px;width:2px;height:349px;background:#6a6a6a"></div>
<div class="a" style="left:686px;top:904px;width:14px;height:347px;background:#f6f6f6"></div>
<div class="a" style="left:700px;top:936px;width:830px;height:16px;background:#e8e8ff"></div>
<div class="t" style="left:660px;top:905.5px;font-size:11px;color:#808080;font-family:'Liberation Mono',monospace">1</div>
<div class="t" style="left:660px;top:921.5px;font-size:11px;color:#808080;font-family:'Liberation Mono',monospace">2</div>
<div class="t" style="left:660px;top:937.5px;font-size:11px;color:#808080;font-family:'Liberation Mono',monospace">3</div>
<svg style="left:688px;top:906px;" width="12" height="44" viewBox="0 0 12 44"><rect x="0.5" y="0.5" width="9" height="9" fill="#fff" stroke="#d02020"/><path d="M2.5 5h5" stroke="#d02020"/><path d="M5 10 v28 h5" stroke="#d02020" fill="none"/></svg>
<div class="t" style="left:701px;top:905.5px;font-size:12px;color:#c02020;font-family:'Liberation Mono',monospace">{</div>
<div class="t" style="left:716px;top:921.5px;font-size:11.5px;color:#a02020;font-family:'Liberation Mono',monospace">"filePath" : "F:\\System\\Desk\\batTest"</div>
<div class="t" style="left:702px;top:937.5px;font-size:12px;color:#c02020;font-family:'Liberation Mono',monospace">}</div>
<div class="a" style="left:706px;top:937px;width:1px;height:14px;background:#4a3ab0"></div>
<div class="a" style="left:1535px;top:904px;width:2px;height:347px;background:#6a6a6a"></div>
<div class="a" style="left:1333px;top:1093px;width:363px;height:145px;border-radius:8px;background:linear-gradient(90deg,#ececec 0,#eaeaea 50%,#dcdee8 100%);border:1px solid #cfcfcf;box-shadow:0 3px 10px rgba(0,0,0,.3)"></div>
<div class="t" style="left:1373px;top:1107.5px;font-size:12px;color:#222">NotifyIconGeneratedAumid_142012316405...</div>
<div class="t" style="left:1622px;top:1106.5px;font-size:12px;color:#555">···</div>
<svg style="left:1664px;top:1109px;" width="11" height="11" viewBox="0 0 11 11"><path d="M0.5 0.5 L10.5 10.5 M10.5 0.5 L0.5 10.5" stroke="#444" stroke-width="1.1"/></svg>
<svg style="left:1352px;top:1149px;" width="42" height="42" viewBox="0 0 42 42"><defs><linearGradient id="eg" x1="0" y1="0" x2="0" y2="1"><stop offset="0" stop-color="#e8581e"/><stop offset="1" stop-color="#d8400e"/></linearGradient></defs><circle cx="21" cy="21" r="20" fill="url(#eg)"/><path d="M13 13 L29 29 M29 13 L13 29" stroke="#fff" stroke-width="2.2"/></svg>
<div class="t" style="left:1413px;top:1146.5px;font-size:14px;color:#222">cmdTest failed at 1.7 in 00:00.013</div>
<div class="t" style="left:1413px;top:1165.0px;font-size:14px;color:#222"># Unexpected JSON token when reading</div>
<div class="t" style="left:1413px;top:1183.5px;font-size:14px;color:#222">DataTable. Expected StartArray, got</div>
<div class="t" style="left:1413px;top:1202.0px;font-size:14px;color:#222">StartObject. Path '', line 1, position 1.</div>
</body></html>
